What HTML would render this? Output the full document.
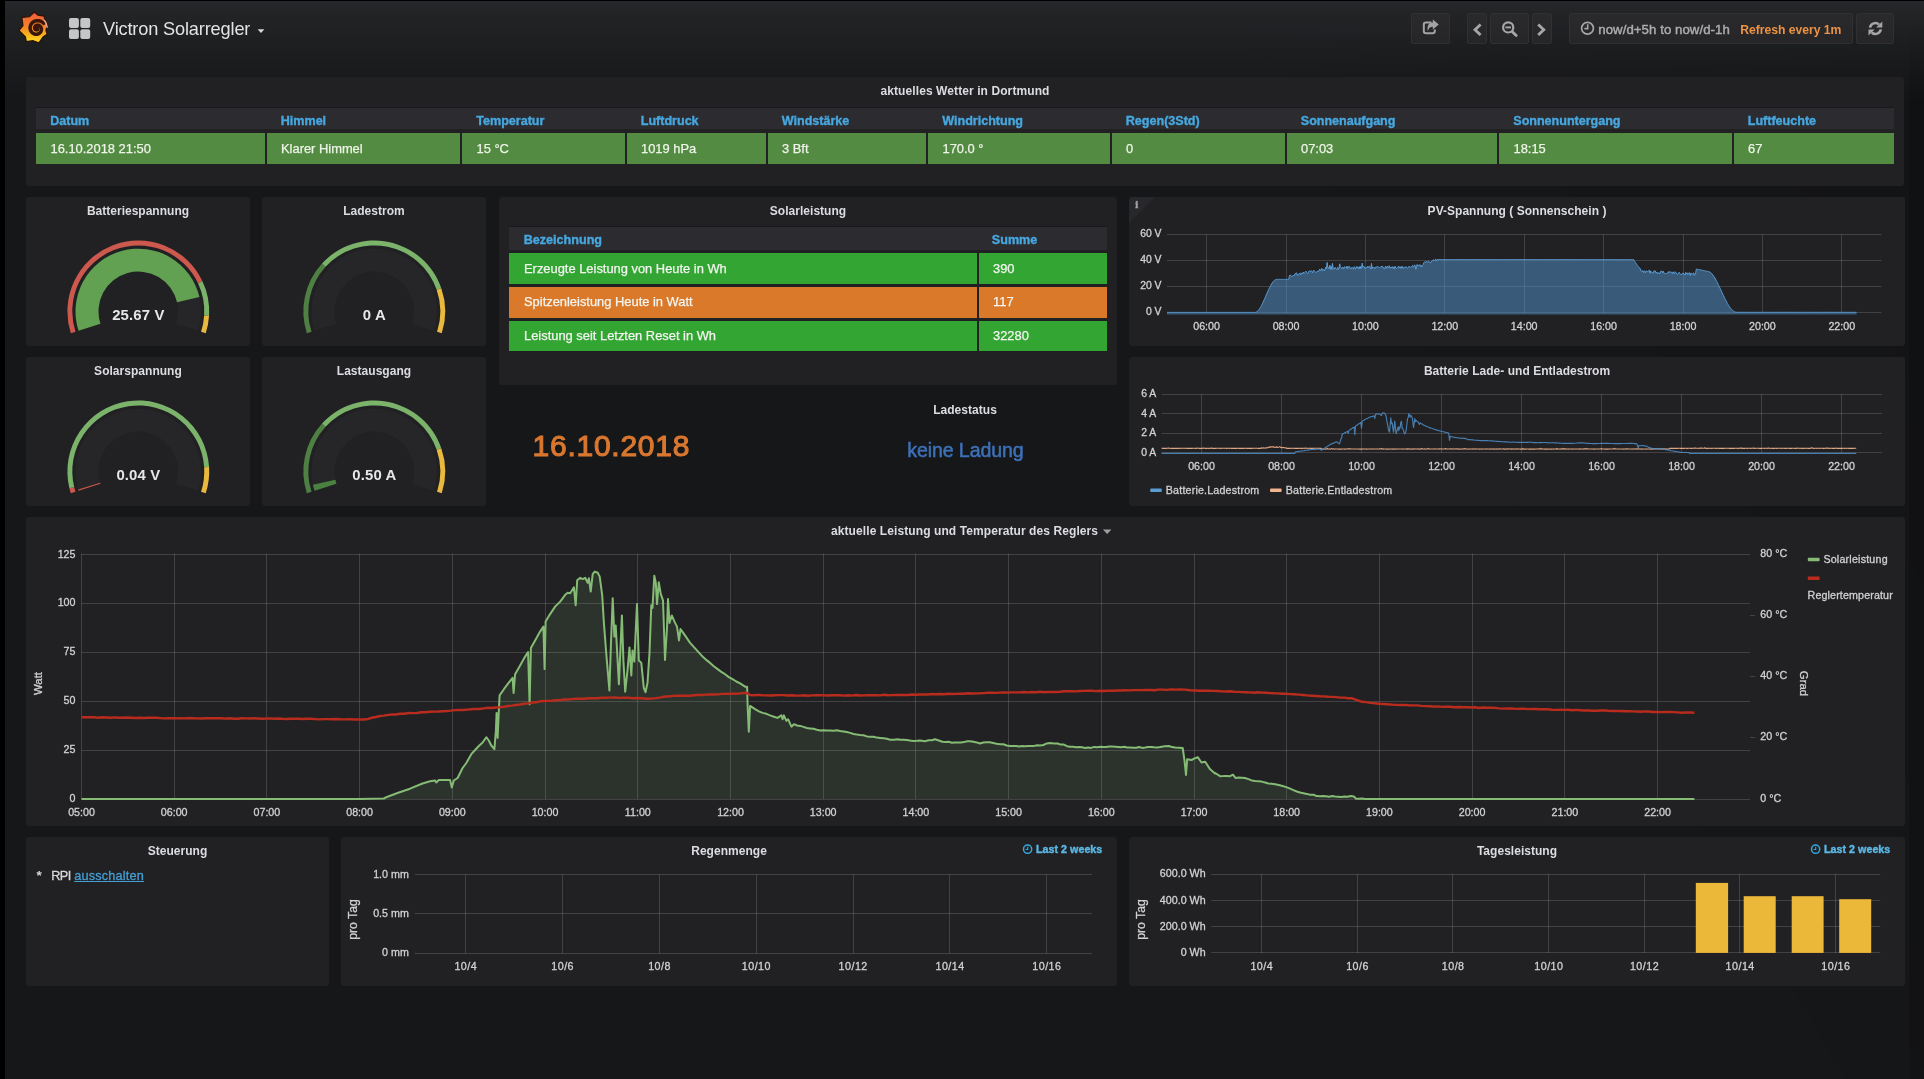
<!DOCTYPE html>
<html lang="de"><head><meta charset="utf-8"><title>Victron Solarregler</title>
<style>
html,body{margin:0;padding:0;}
body{width:1924px;height:1079px;overflow:hidden;position:relative;background:#161719;font-family:"Liberation Sans",sans-serif;color:#d8d9da;}
.t{position:absolute;white-space:nowrap;line-height:1;}
.p{position:absolute;background:#212124;border-radius:3px;}
.abs{position:absolute;}
svg{position:absolute;left:0;top:0;overflow:visible;}
svg text{font-family:"Liberation Sans",sans-serif;}
.btn{position:absolute;top:13px;height:31px;background:linear-gradient(#2a2a2d,#262629);border:1px solid #303033;border-radius:2px;box-sizing:border-box;}
.th{position:absolute;background:#2b2b30;}
.td{position:absolute;}
</style></head><body><div id="root" style="position:absolute;left:0;top:0;width:1924px;height:1079px;will-change:transform;">

<div class="abs" style="left:0;top:0;width:1924px;height:1079px;background:linear-gradient(60deg,rgba(0,0,0,0) 72%,rgba(0,0,0,0.12) 98%);"></div>
<div class="abs" style="left:1909px;top:1px;width:15px;height:1078px;background:rgba(0,0,0,0.16);"></div>
<div class="abs" style="left:0;top:0;width:1924px;height:104px;background:linear-gradient(180deg,#27282b 0px,#232527 9px,rgba(34,36,38,0.55) 50px,rgba(34,36,38,0) 102px);"></div>
<div class="abs" style="left:0;top:0;width:5px;height:1079px;background:#000;"></div>
<div class="abs" style="left:0;top:0;width:1924px;height:1px;background:#000;"></div>
<div class="btn" style="left:1411.2px;width:38.6px;"></div>
<div class="btn" style="left:1467.3px;width:19.5px;"></div>
<div class="btn" style="left:1490.2px;width:38.4px;"></div>
<div class="btn" style="left:1532.0px;width:20.0px;"></div>
<div class="btn" style="left:1569.0px;width:283.6px;"></div>
<div class="btn" style="left:1855.8px;width:38.3px;"></div>
<svg width="1924" height="75" viewBox="0 0 1924 75">
<defs><linearGradient id="lg" x1="0" y1="0" x2="0" y2="1"><stop offset="0" stop-color="#ef5b3c"/><stop offset="0.5" stop-color="#f58527"/><stop offset="0.85" stop-color="#fbc81c"/><stop offset="1" stop-color="#fdd820"/></linearGradient></defs>
<polygon points="34.4,12.0 38.1,15.2 44.2,16.2 44.7,19.6 47.4,25.2 45.9,30.1 47.1,34.2 43.0,37.0 38.9,42.8 33.2,40.7 26.3,41.6 25.5,37.0 18.9,30.5 23.0,25.6 21.8,17.4 29.5,16.6" fill="url(#lg)" stroke="#2a1208" stroke-width="1.2" stroke-linejoin="round"/>
<path d="M43.68,23.31 L42.69,22.39 L41.58,21.66 L40.39,21.12 L39.14,20.78 L37.88,20.63 L36.62,20.69 L35.41,20.95 L34.27,21.38 L33.23,21.98 L32.31,22.73 L31.54,23.60 L30.91,24.56 L30.46,25.60 L30.18,26.67 L30.08,27.76 L30.14,28.84 L30.38,29.87 L30.76,30.83 L31.29,31.71 L31.94,32.48 L32.68,33.12 L33.51,33.63 L34.38,34.00 L35.29,34.21 L36.20,34.28 L37.10,34.21 L37.95,33.99 L38.74,33.66 L39.45,33.20 L40.07,32.66 L40.58,32.03 L40.98,31.35 L41.25,30.63 L41.41,29.89 L41.44,29.16 L41.36,28.44 L41.17,27.77 L40.87,27.15 L40.50,26.61 L40.05,26.14 L39.55,25.76 L39.01,25.47 L38.44,25.29 L37.88,25.20 L37.32,25.20 L36.78,25.29 L36.29,25.46 L35.85,25.71 L35.46,26.01 L35.15,26.35 L34.90,26.73 L34.73,27.13 L34.63,27.54 L34.60,27.94 L34.64,28.32 L34.74,28.68 L34.89,28.99 L35.09,29.26 L35.31,29.48 L35.56,29.65" fill="none" stroke="#3a170a" stroke-width="3.5" stroke-linecap="round" stroke-linejoin="round"/>
<circle cx="37.0" cy="29.0" r="2.5" fill="#3a170a"/>
<path d="M44.4,20.4 A10.6,10.6 0 0 1 47.1,27.2" fill="none" stroke="#f4a88a" stroke-width="1.5" stroke-linecap="round"/>
<rect x="69.0" y="18.0" width="9.9" height="9.9" rx="2" fill="#c6c6c8"/>
<rect x="69.0" y="29.2" width="9.9" height="9.9" rx="2" fill="#c6c6c8"/>
<rect x="80.3" y="18.0" width="9.9" height="9.9" rx="2" fill="#c6c6c8"/>
<rect x="80.3" y="29.2" width="9.9" height="9.9" rx="2" fill="#c6c6c8"/>
<path d="M257.6,29.2 L264.4,29.2 L261,33 Z" fill="#d8d9da"/>
<path d="M1431.5,22.6 H1426 a2.2,2.2 0 0 0 -2.2,2.2 V31 a2.2,2.2 0 0 0 2.2,2.2 H1432.6 a2.2,2.2 0 0 0 2.2,-2.2 V29.6" fill="none" stroke="#a3a3a5" stroke-width="2"/>
<path d="M1432.8,19.6 L1438.8,24.6 L1432.8,29.6 V26.8 C1430,26.8 1428.6,28.2 1427.8,31.2 C1426.8,26 1429,22.6 1432.8,22.6 Z" fill="#a3a3a5"/>
<path d="M1480.6,24.4 L1475,29.7 L1480.6,35" fill="none" stroke="#a6a6a8" stroke-width="2.8"/>
<path d="M1538.2,24.4 L1543.8,29.7 L1538.2,35" fill="none" stroke="#a6a6a8" stroke-width="2.8"/>
<circle cx="1508.2" cy="27.4" r="5.1" fill="none" stroke="#a6a6a8" stroke-width="2.2"/>
<path d="M1505.4,27.4 H1511" stroke="#a6a6a8" stroke-width="2"/>
<path d="M1512.3,31.7 L1516.2,35.6" stroke="#a6a6a8" stroke-width="2.8" stroke-linecap="round"/>
<circle cx="1587.5" cy="28.2" r="5.9" fill="none" stroke="#a6a6a8" stroke-width="1.7"/>
<path d="M1587.7,24.3 V28.6 H1584.4" fill="none" stroke="#a6a6a8" stroke-width="1.6"/>
<g transform="translate(1875.4,28.5)" fill="#a6a6a8" stroke="none">
<path d="M-5.4,-0.9 A5.4,5.4 0 0 1 3.6,-4.0" fill="none" stroke="#a6a6a8" stroke-width="2.6"/>
<path d="M6.9,-7 V-0.9 H0.8 Z"/>
<path d="M5.4,0.9 A5.4,5.4 0 0 1 -3.6,4.0" fill="none" stroke="#a6a6a8" stroke-width="2.6"/>
<path d="M-6.9,7 V0.9 H-0.8 Z"/>
</g>
</svg>
<span class="t" style="left:103.0px;top:20.1px;font-size:18.20px;color:#e2e3e4;font-weight:normal;letter-spacing:-0.16px;">Victron Solarregler</span>
<span class="t" style="left:1598.3px;top:23.1px;font-size:13.20px;color:#acacae;font-weight:normal;letter-spacing:0.07px;-webkit-text-stroke:0.45px #acacae;">now/d+5h to now/d-1h</span>
<span class="t" style="left:1740.3px;top:24.0px;font-size:12.20px;color:#ec9245;font-weight:bold;letter-spacing:-0.04px;">Refresh every 1m</span>
<div class="p" style="left:26px;top:77px;width:1878px;height:109px;"></div>
<span class="t" style="left:880.5px;top:84.8px;font-size:12.00px;color:#dcdde0;font-weight:bold;letter-spacing:0.09px;">aktuelles Wetter in Dortmund</span>
<div class="th" style="left:36px;top:106.5px;width:1858px;height:22.7px;border-top:1px solid #19191b;box-sizing:border-box;"></div>
<div class="td" style="left:36.0px;top:133px;width:228.5px;height:30.8px;background:#548b43;"></div>
<span class="t" style="left:50.3px;top:114.8px;font-size:12.60px;color:#47a8e0;font-weight:bold;letter-spacing:-0.04px;-webkit-text-stroke:0.35px #47a8e0;">Datum</span>
<span class="t" style="left:50.5px;top:143.0px;font-size:12.90px;color:#eef4e8;font-weight:normal;letter-spacing:0.00px;-webkit-text-stroke:0.25px #eef4e8;">16.10.2018 21:50</span>
<div class="td" style="left:266.5px;top:133px;width:193.5px;height:30.8px;background:#548b43;"></div>
<span class="t" style="left:280.8px;top:114.8px;font-size:12.60px;color:#47a8e0;font-weight:bold;letter-spacing:-0.04px;-webkit-text-stroke:0.35px #47a8e0;">Himmel</span>
<span class="t" style="left:281.0px;top:143.0px;font-size:12.90px;color:#eef4e8;font-weight:normal;letter-spacing:0.00px;-webkit-text-stroke:0.25px #eef4e8;">Klarer Himmel</span>
<div class="td" style="left:462.0px;top:133px;width:162.5px;height:30.8px;background:#548b43;"></div>
<span class="t" style="left:476.3px;top:114.8px;font-size:12.60px;color:#47a8e0;font-weight:bold;letter-spacing:-0.03px;-webkit-text-stroke:0.35px #47a8e0;">Temperatur</span>
<span class="t" style="left:476.5px;top:143.0px;font-size:12.90px;color:#eef4e8;font-weight:normal;letter-spacing:0.00px;-webkit-text-stroke:0.25px #eef4e8;">15 °C</span>
<div class="td" style="left:626.5px;top:133px;width:139.0px;height:30.8px;background:#548b43;"></div>
<span class="t" style="left:640.8px;top:114.8px;font-size:12.60px;color:#47a8e0;font-weight:bold;letter-spacing:-0.03px;-webkit-text-stroke:0.35px #47a8e0;">Luftdruck</span>
<span class="t" style="left:641.0px;top:143.0px;font-size:12.90px;color:#eef4e8;font-weight:normal;letter-spacing:0.00px;-webkit-text-stroke:0.25px #eef4e8;">1019 hPa</span>
<div class="td" style="left:767.5px;top:133px;width:158.5px;height:30.8px;background:#548b43;"></div>
<span class="t" style="left:781.8px;top:114.8px;font-size:12.60px;color:#47a8e0;font-weight:bold;letter-spacing:-0.03px;-webkit-text-stroke:0.35px #47a8e0;">Windstärke</span>
<span class="t" style="left:782.0px;top:143.0px;font-size:12.90px;color:#eef4e8;font-weight:normal;letter-spacing:0.00px;-webkit-text-stroke:0.25px #eef4e8;">3 Bft</span>
<div class="td" style="left:928.0px;top:133px;width:181.5px;height:30.8px;background:#548b43;"></div>
<span class="t" style="left:942.3px;top:114.8px;font-size:12.60px;color:#47a8e0;font-weight:bold;letter-spacing:-0.03px;-webkit-text-stroke:0.35px #47a8e0;">Windrichtung</span>
<span class="t" style="left:942.5px;top:143.0px;font-size:12.90px;color:#eef4e8;font-weight:normal;letter-spacing:0.00px;-webkit-text-stroke:0.25px #eef4e8;">170.0 °</span>
<div class="td" style="left:1111.5px;top:133px;width:173.0px;height:30.8px;background:#548b43;"></div>
<span class="t" style="left:1125.8px;top:114.8px;font-size:12.60px;color:#47a8e0;font-weight:bold;letter-spacing:-0.03px;-webkit-text-stroke:0.35px #47a8e0;">Regen(3Std)</span>
<span class="t" style="left:1126.0px;top:143.0px;font-size:12.90px;color:#eef4e8;font-weight:normal;letter-spacing:0.00px;-webkit-text-stroke:0.25px #eef4e8;">0</span>
<div class="td" style="left:1286.5px;top:133px;width:210.5px;height:30.8px;background:#548b43;"></div>
<span class="t" style="left:1300.8px;top:114.8px;font-size:12.60px;color:#47a8e0;font-weight:bold;letter-spacing:-0.04px;-webkit-text-stroke:0.35px #47a8e0;">Sonnenaufgang</span>
<span class="t" style="left:1301.0px;top:143.0px;font-size:12.90px;color:#eef4e8;font-weight:normal;letter-spacing:0.00px;-webkit-text-stroke:0.25px #eef4e8;">07:03</span>
<div class="td" style="left:1499.0px;top:133px;width:232.5px;height:30.8px;background:#548b43;"></div>
<span class="t" style="left:1513.3px;top:114.8px;font-size:12.60px;color:#47a8e0;font-weight:bold;letter-spacing:-0.04px;-webkit-text-stroke:0.35px #47a8e0;">Sonnenuntergang</span>
<span class="t" style="left:1513.5px;top:143.0px;font-size:12.90px;color:#eef4e8;font-weight:normal;letter-spacing:0.00px;-webkit-text-stroke:0.25px #eef4e8;">18:15</span>
<div class="td" style="left:1733.5px;top:133px;width:160.5px;height:30.8px;background:#548b43;"></div>
<span class="t" style="left:1747.8px;top:114.8px;font-size:12.60px;color:#47a8e0;font-weight:bold;letter-spacing:-0.03px;-webkit-text-stroke:0.35px #47a8e0;">Luftfeuchte</span>
<span class="t" style="left:1748.0px;top:143.0px;font-size:12.90px;color:#eef4e8;font-weight:normal;letter-spacing:0.00px;-webkit-text-stroke:0.25px #eef4e8;">67</span>
<div class="p" style="left:26px;top:197px;width:224px;height:149px;"></div>
<span class="t" style="left:86.9px;top:204.8px;font-size:12.00px;color:#dcdde0;font-weight:bold;letter-spacing:0.01px;">Batteriespannung</span>
<svg width="1924" height="1079" viewBox="0 0 1924 1079"><path d="M78.57,330.81 A62.80,62.80 0 1 1 198.03,330.81 L176.15,323.70 A39.80,39.80 0 1 0 100.45,323.70 Z" fill="#262628"/><path d="M78.57,330.81 A62.80,62.80 0 1 1 199.45,297.09 L177.05,302.33 A39.80,39.80 0 1 0 100.45,323.70 Z" fill="#62a052"/><path d="M70.87,333.31 A70.90,70.90 0 0 1 202.45,281.21 L198.02,283.30 A66.00,66.00 0 0 0 75.53,331.80 Z" fill="#cd584d"/><path d="M202.45,281.21 A70.90,70.90 0 0 1 209.06,315.84 L204.17,315.54 A66.00,66.00 0 0 0 198.02,283.30 Z" fill="#7bb36b"/><path d="M209.06,315.84 A70.90,70.90 0 0 1 205.73,333.31 L201.07,331.80 A66.00,66.00 0 0 0 204.17,315.54 Z" fill="#e9b83f"/></svg>
<span class="t" style="left:112.2px;top:307.7px;font-size:14.90px;color:#e6e7e8;font-weight:bold;letter-spacing:0.15px;">25.67 V</span>
<div class="p" style="left:262px;top:197px;width:224px;height:149px;"></div>
<span class="t" style="left:343.2px;top:204.8px;font-size:12.00px;color:#dcdde0;font-weight:bold;letter-spacing:0.03px;">Ladestrom</span>
<svg width="1924" height="1079" viewBox="0 0 1924 1079"><path d="M314.57,330.81 A62.80,62.80 0 1 1 434.03,330.81 L412.15,323.70 A39.80,39.80 0 1 0 336.45,323.70 Z" fill="#262628"/><path d="M306.87,333.31 A70.90,70.90 0 0 1 322.01,263.52 L325.62,266.83 A66.00,66.00 0 0 0 311.53,331.80 Z" fill="#4f8043"/><path d="M322.01,263.52 A70.90,70.90 0 0 1 441.28,288.14 L436.65,289.75 A66.00,66.00 0 0 0 325.62,266.83 Z" fill="#7bb36b"/><path d="M441.28,288.14 A70.90,70.90 0 0 1 441.73,333.31 L437.07,331.80 A66.00,66.00 0 0 0 436.65,289.75 Z" fill="#e9b83f"/></svg>
<span class="t" style="left:362.8px;top:307.7px;font-size:14.90px;color:#e6e7e8;font-weight:bold;letter-spacing:0.15px;">0 A</span>
<div class="p" style="left:26px;top:357px;width:224px;height:149px;"></div>
<span class="t" style="left:94.1px;top:364.8px;font-size:12.00px;color:#dcdde0;font-weight:bold;letter-spacing:0.03px;">Solarspannung</span>
<svg width="1924" height="1079" viewBox="0 0 1924 1079"><path d="M78.57,490.81 A62.80,62.80 0 1 1 198.03,490.81 L176.15,483.70 A39.80,39.80 0 1 0 100.45,483.70 Z" fill="#262628"/><path d="M78.57,490.81 A62.80,62.80 0 0 1 78.15,489.45 L100.18,482.84 A39.80,39.80 0 0 0 100.45,483.70 Z" fill="#c9564b"/><path d="M70.87,493.31 A70.90,70.90 0 0 1 69.41,488.17 L74.17,487.01 A66.00,66.00 0 0 0 75.53,491.80 Z" fill="#cd584d"/><path d="M69.41,488.17 A70.90,70.90 0 1 1 209.06,466.95 L204.17,467.26 A66.00,66.00 0 1 0 74.17,487.01 Z" fill="#7bb36b"/><path d="M209.06,466.95 A70.90,70.90 0 0 1 205.73,493.31 L201.07,491.80 A66.00,66.00 0 0 0 204.17,467.26 Z" fill="#e9b83f"/></svg>
<span class="t" style="left:116.4px;top:467.7px;font-size:14.90px;color:#e6e7e8;font-weight:bold;letter-spacing:0.14px;">0.04 V</span>
<div class="p" style="left:262px;top:357px;width:224px;height:149px;"></div>
<span class="t" style="left:336.8px;top:364.8px;font-size:12.00px;color:#dcdde0;font-weight:bold;letter-spacing:0.03px;">Lastausgang</span>
<svg width="1924" height="1079" viewBox="0 0 1924 1079"><path d="M314.57,490.81 A62.80,62.80 0 1 1 434.03,490.81 L412.15,483.70 A39.80,39.80 0 1 0 336.45,483.70 Z" fill="#262628"/><path d="M314.57,490.81 A62.80,62.80 0 0 1 312.91,484.64 L335.39,479.79 A39.80,39.80 0 0 0 336.45,483.70 Z" fill="#4a8040"/><path d="M306.87,493.31 A70.90,70.90 0 0 1 322.01,423.52 L325.62,426.83 A66.00,66.00 0 0 0 311.53,491.80 Z" fill="#4f8043"/><path d="M322.01,423.52 A70.90,70.90 0 0 1 441.28,448.14 L436.65,449.75 A66.00,66.00 0 0 0 325.62,426.83 Z" fill="#7bb36b"/><path d="M441.28,448.14 A70.90,70.90 0 0 1 441.73,493.31 L437.07,491.80 A66.00,66.00 0 0 0 436.65,449.75 Z" fill="#e9b83f"/></svg>
<span class="t" style="left:352.3px;top:467.7px;font-size:14.90px;color:#e6e7e8;font-weight:bold;letter-spacing:0.14px;">0.50 A</span>
<div class="p" style="left:499px;top:197px;width:618px;height:188px;"></div>
<span class="t" style="left:769.8px;top:204.8px;font-size:12.00px;color:#dcdde0;font-weight:bold;letter-spacing:0.03px;">Solarleistung</span>
<div class="th" style="left:509px;top:226px;width:598px;height:24px;border-top:1px solid #19191b;box-sizing:border-box;"></div>
<span class="t" style="left:523.7px;top:234.4px;font-size:12.60px;color:#47a8e0;font-weight:bold;letter-spacing:0.00px;-webkit-text-stroke:0.35px #47a8e0;">Bezeichnung</span>
<span class="t" style="left:991.8px;top:234.4px;font-size:12.60px;color:#47a8e0;font-weight:bold;letter-spacing:0.00px;-webkit-text-stroke:0.35px #47a8e0;">Summe</span>
<div class="td" style="left:509px;top:253.3px;width:467.5px;height:30.9px;background:#33a532;"></div>
<div class="td" style="left:978.5px;top:253.3px;width:128.5px;height:30.9px;background:#33a532;"></div>
<span class="t" style="left:524.0px;top:262.6px;font-size:12.90px;color:#f2f5f0;font-weight:normal;letter-spacing:0.00px;-webkit-text-stroke:0.25px #f2f5f0;">Erzeugte Leistung von Heute in Wh</span>
<span class="t" style="left:993.0px;top:262.6px;font-size:12.90px;color:#f2f5f0;font-weight:normal;letter-spacing:0.00px;-webkit-text-stroke:0.25px #f2f5f0;">390</span>
<div class="td" style="left:509px;top:286.6px;width:467.5px;height:31.4px;background:#db792a;"></div>
<div class="td" style="left:978.5px;top:286.6px;width:128.5px;height:31.4px;background:#db792a;"></div>
<span class="t" style="left:524.0px;top:296.2px;font-size:12.90px;color:#f2f5f0;font-weight:normal;letter-spacing:0.00px;-webkit-text-stroke:0.25px #f2f5f0;">Spitzenleistung Heute in Watt</span>
<span class="t" style="left:993.0px;top:296.2px;font-size:12.90px;color:#f2f5f0;font-weight:normal;letter-spacing:0.00px;-webkit-text-stroke:0.25px #f2f5f0;">117</span>
<div class="td" style="left:509px;top:320.6px;width:467.5px;height:30.6px;background:#33a532;"></div>
<div class="td" style="left:978.5px;top:320.6px;width:128.5px;height:30.6px;background:#33a532;"></div>
<span class="t" style="left:524.0px;top:329.8px;font-size:12.90px;color:#f2f5f0;font-weight:normal;letter-spacing:0.00px;-webkit-text-stroke:0.25px #f2f5f0;">Leistung seit Letzten Reset in Wh</span>
<span class="t" style="left:993.0px;top:329.8px;font-size:12.90px;color:#f2f5f0;font-weight:normal;letter-spacing:0.00px;-webkit-text-stroke:0.25px #f2f5f0;">32280</span>
<span class="t" style="left:532.6px;top:430.6px;font-size:30.00px;color:#d9772f;font-weight:normal;letter-spacing:0.73px;-webkit-text-stroke:1.1px #d9772f;">16.10.2018</span>
<span class="t" style="left:933.2px;top:403.7px;font-size:12.00px;color:#dcdde0;font-weight:bold;letter-spacing:0.03px;">Ladestatus</span>
<span class="t" style="left:907.2px;top:440.7px;font-size:19.60px;color:#3d71b8;font-weight:normal;letter-spacing:-0.10px;-webkit-text-stroke:0.5px #3d71b8;">keine Ladung</span>
<div class="p" style="left:1129px;top:197px;width:776px;height:149px;"></div>
<span class="t" style="left:1427.6px;top:204.8px;font-size:12.00px;color:#dcdde0;font-weight:bold;letter-spacing:0.03px;">PV-Spannung ( Sonnenschein )</span>
<svg width="1924" height="1079" viewBox="0 0 1924 1079"><path d="M1129,200 a3,3 0 0 1 3,-3 H1155 L1129,223 Z" fill="#28282c"/><text x="1136.8" y="208.4" font-size="10.50" fill="#a2a2a4" text-anchor="middle" letter-spacing="0.00" font-weight="bold" stroke="#a2a2a4" stroke-width="0.5" style="font-family:Liberation Serif,serif">i</text><path d="M1167,312.5 H1881.5" stroke="rgba(200,200,200,0.2)" stroke-width="1"/><text x="1161.5" y="315.4" font-size="10.40" fill="#d0d1d3" text-anchor="end" letter-spacing="0.00" stroke="#d0d1d3" stroke-width="0.3" >0 V</text><path d="M1167,286.5 H1881.5" stroke="rgba(200,200,200,0.2)" stroke-width="1"/><text x="1161.5" y="289.4" font-size="10.40" fill="#d0d1d3" text-anchor="end" letter-spacing="0.00" stroke="#d0d1d3" stroke-width="0.3" >20 V</text><path d="M1167,260.5 H1881.5" stroke="rgba(200,200,200,0.2)" stroke-width="1"/><text x="1161.5" y="263.3" font-size="10.40" fill="#d0d1d3" text-anchor="end" letter-spacing="0.00" stroke="#d0d1d3" stroke-width="0.3" >40 V</text><path d="M1167,234.5 H1881.5" stroke="rgba(200,200,200,0.2)" stroke-width="1"/><text x="1161.5" y="237.2" font-size="10.40" fill="#d0d1d3" text-anchor="end" letter-spacing="0.00" stroke="#d0d1d3" stroke-width="0.3" >60 V</text><path d="M1206.5,234.5 V313" stroke="rgba(200,200,200,0.2)" stroke-width="1"/><text x="1206.6" y="330.1" font-size="10.70" fill="#d0d1d3" text-anchor="middle" letter-spacing="0.00" stroke="#d0d1d3" stroke-width="0.3" >06:00</text><path d="M1286.5,234.5 V313" stroke="rgba(200,200,200,0.2)" stroke-width="1"/><text x="1286.0" y="330.1" font-size="10.70" fill="#d0d1d3" text-anchor="middle" letter-spacing="0.00" stroke="#d0d1d3" stroke-width="0.3" >08:00</text><path d="M1365.5,234.5 V313" stroke="rgba(200,200,200,0.2)" stroke-width="1"/><text x="1365.4" y="330.1" font-size="10.70" fill="#d0d1d3" text-anchor="middle" letter-spacing="0.00" stroke="#d0d1d3" stroke-width="0.3" >10:00</text><path d="M1444.5,234.5 V313" stroke="rgba(200,200,200,0.2)" stroke-width="1"/><text x="1444.8" y="330.1" font-size="10.70" fill="#d0d1d3" text-anchor="middle" letter-spacing="0.00" stroke="#d0d1d3" stroke-width="0.3" >12:00</text><path d="M1524.5,234.5 V313" stroke="rgba(200,200,200,0.2)" stroke-width="1"/><text x="1524.2" y="330.1" font-size="10.70" fill="#d0d1d3" text-anchor="middle" letter-spacing="0.00" stroke="#d0d1d3" stroke-width="0.3" >14:00</text><path d="M1603.5,234.5 V313" stroke="rgba(200,200,200,0.2)" stroke-width="1"/><text x="1603.6" y="330.1" font-size="10.70" fill="#d0d1d3" text-anchor="middle" letter-spacing="0.00" stroke="#d0d1d3" stroke-width="0.3" >16:00</text><path d="M1683.5,234.5 V313" stroke="rgba(200,200,200,0.2)" stroke-width="1"/><text x="1683.0" y="330.1" font-size="10.70" fill="#d0d1d3" text-anchor="middle" letter-spacing="0.00" stroke="#d0d1d3" stroke-width="0.3" >18:00</text><path d="M1762.5,234.5 V313" stroke="rgba(200,200,200,0.2)" stroke-width="1"/><text x="1762.4" y="330.1" font-size="10.70" fill="#d0d1d3" text-anchor="middle" letter-spacing="0.00" stroke="#d0d1d3" stroke-width="0.3" >20:00</text><path d="M1841.5,234.5 V313" stroke="rgba(200,200,200,0.2)" stroke-width="1"/><text x="1841.8" y="330.1" font-size="10.70" fill="#d0d1d3" text-anchor="middle" letter-spacing="0.00" stroke="#d0d1d3" stroke-width="0.3" >22:00</text><path d="M1167.0,312.4 L1167.7,312.4 L1168.3,312.4 L1169.0,312.4 L1169.6,312.4 L1170.3,312.4 L1171.0,312.4 L1171.6,312.4 L1172.3,312.4 L1173.0,312.4 L1173.6,312.4 L1174.3,312.4 L1174.9,312.4 L1175.6,312.4 L1176.3,312.4 L1176.9,312.4 L1177.6,312.4 L1178.2,312.4 L1178.9,312.4 L1179.6,312.4 L1180.2,312.4 L1180.9,312.4 L1181.6,312.4 L1182.2,312.4 L1182.9,312.4 L1183.5,312.4 L1184.2,312.4 L1184.9,312.4 L1185.5,312.4 L1186.2,312.4 L1186.8,312.4 L1187.5,312.4 L1188.2,312.4 L1188.8,312.4 L1189.5,312.4 L1190.2,312.4 L1190.8,312.4 L1191.5,312.4 L1192.1,312.4 L1192.8,312.4 L1193.5,312.4 L1194.1,312.4 L1194.8,312.4 L1195.5,312.4 L1196.1,312.4 L1196.8,312.4 L1197.4,312.4 L1198.1,312.4 L1198.8,312.4 L1199.4,312.4 L1200.1,312.4 L1200.7,312.4 L1201.4,312.4 L1202.1,312.4 L1202.7,312.4 L1203.4,312.4 L1204.1,312.4 L1204.7,312.4 L1205.4,312.4 L1206.0,312.4 L1206.7,312.4 L1207.4,312.4 L1208.0,312.4 L1208.7,312.4 L1209.3,312.4 L1210.0,312.4 L1210.7,312.4 L1211.3,312.4 L1212.0,312.4 L1212.7,312.4 L1213.3,312.4 L1214.0,312.4 L1214.6,312.4 L1215.3,312.4 L1216.0,312.4 L1216.6,312.4 L1217.3,312.4 L1217.9,312.4 L1218.6,312.4 L1219.3,312.4 L1219.9,312.4 L1220.6,312.4 L1221.3,312.4 L1221.9,312.4 L1222.6,312.4 L1223.2,312.4 L1223.9,312.4 L1224.6,312.4 L1225.2,312.4 L1225.9,312.4 L1226.5,312.4 L1227.2,312.4 L1227.9,312.4 L1228.5,312.4 L1229.2,312.4 L1229.9,312.4 L1230.5,312.4 L1231.2,312.4 L1231.8,312.4 L1232.5,312.4 L1233.2,312.4 L1233.8,312.4 L1234.5,312.4 L1235.2,312.4 L1235.8,312.4 L1236.5,312.4 L1237.1,312.4 L1237.8,312.4 L1238.5,312.4 L1239.1,312.4 L1239.8,312.4 L1240.4,312.4 L1241.1,312.4 L1241.8,312.4 L1242.4,312.4 L1243.1,312.4 L1243.8,312.4 L1244.4,312.4 L1245.1,312.4 L1245.7,312.4 L1246.4,312.4 L1247.1,312.4 L1247.7,312.4 L1248.4,312.4 L1249.0,312.4 L1249.7,312.4 L1250.4,312.4 L1251.0,312.4 L1251.7,312.4 L1252.4,312.4 L1253.0,312.4 L1253.7,312.4 L1254.3,312.4 L1255.0,312.4 L1255.7,312.3 L1256.3,312.1 L1257.0,311.7 L1257.6,311.2 L1258.3,310.4 L1259.0,309.6 L1259.6,308.7 L1260.3,307.6 L1261.0,306.4 L1261.6,305.2 L1262.3,303.9 L1262.9,302.5 L1263.6,301.0 L1264.3,299.6 L1264.9,298.1 L1265.6,296.5 L1266.2,295.0 L1266.9,293.5 L1267.6,292.0 L1268.2,290.5 L1268.9,289.1 L1269.6,287.7 L1270.2,286.4 L1270.9,285.2 L1271.5,284.0 L1272.2,283.0 L1272.9,282.1 L1273.5,281.2 L1274.2,280.6 L1274.9,280.0 L1275.5,279.7 L1276.2,279.5 L1276.8,279.4 L1277.5,279.4 L1278.2,279.4 L1278.8,279.4 L1279.5,279.4 L1280.1,279.4 L1280.8,279.4 L1281.5,279.4 L1282.1,279.4 L1282.8,279.4 L1283.5,279.4 L1284.1,279.4 L1284.8,279.4 L1285.4,279.4 L1286.1,279.4 L1286.8,279.4 L1287.4,279.4 L1288.1,279.4 L1288.7,279.4 L1289.4,276.1 L1290.1,274.9 L1290.7,275.2 L1291.4,276.5 L1292.1,276.5 L1292.7,276.3 L1293.4,275.0 L1294.0,275.9 L1294.7,274.2 L1295.4,274.2 L1296.0,272.8 L1296.7,273.1 L1297.3,275.2 L1298.0,274.6 L1298.7,274.9 L1299.3,273.3 L1300.0,273.5 L1300.7,274.9 L1301.3,272.8 L1302.0,273.9 L1302.6,273.3 L1303.3,272.1 L1304.0,273.7 L1304.6,272.7 L1305.3,272.0 L1306.0,271.1 L1306.6,272.7 L1307.3,273.4 L1307.9,273.7 L1308.6,271.3 L1309.3,270.8 L1309.9,271.3 L1310.6,271.5 L1311.2,270.6 L1311.9,271.6 L1312.6,272.8 L1313.2,270.8 L1313.9,270.2 L1314.6,271.4 L1315.2,272.4 L1315.9,271.9 L1316.5,272.1 L1317.2,271.8 L1317.9,270.8 L1318.5,271.7 L1319.2,270.1 L1319.8,269.1 L1320.5,270.7 L1321.2,270.3 L1321.8,268.3 L1322.5,270.7 L1323.2,270.4 L1323.8,269.2 L1324.5,270.9 L1325.1,269.6 L1325.8,267.1 L1326.5,268.5 L1327.1,262.4 L1327.8,267.6 L1328.4,267.6 L1329.1,268.8 L1329.8,265.2 L1330.4,269.4 L1331.1,266.3 L1331.8,269.5 L1332.4,263.4 L1333.1,268.0 L1333.7,269.2 L1334.4,268.8 L1335.1,267.3 L1335.7,268.5 L1336.4,269.6 L1337.0,268.8 L1337.7,267.3 L1338.4,269.8 L1339.0,268.2 L1339.7,263.8 L1340.4,266.8 L1341.0,267.6 L1341.7,268.6 L1342.3,267.4 L1343.0,267.3 L1343.7,269.1 L1344.3,266.7 L1345.0,267.2 L1345.7,267.4 L1346.3,268.1 L1347.0,266.1 L1347.6,268.9 L1348.3,266.7 L1349.0,266.7 L1349.6,266.6 L1350.3,268.9 L1350.9,269.0 L1351.6,267.6 L1352.3,266.9 L1352.9,267.5 L1353.6,269.3 L1354.3,266.7 L1354.9,267.2 L1355.6,268.9 L1356.2,268.4 L1356.9,266.4 L1357.6,268.2 L1358.2,267.2 L1358.9,269.0 L1359.5,266.6 L1360.2,268.9 L1360.9,266.3 L1361.5,268.3 L1362.2,263.2 L1362.9,267.3 L1363.5,266.4 L1364.2,266.6 L1364.8,268.6 L1365.5,268.4 L1366.2,267.4 L1366.8,268.0 L1367.5,266.4 L1368.1,267.8 L1368.8,266.4 L1369.5,266.3 L1370.1,267.5 L1370.8,269.1 L1371.5,263.4 L1372.1,268.6 L1372.8,266.9 L1373.4,268.1 L1374.1,267.4 L1374.8,268.8 L1375.4,268.3 L1376.1,266.7 L1376.7,267.3 L1377.4,266.2 L1378.1,267.1 L1378.7,267.4 L1379.4,267.6 L1380.1,267.5 L1380.7,266.8 L1381.4,266.0 L1382.0,267.2 L1382.7,266.3 L1383.4,268.5 L1384.0,268.7 L1384.7,268.7 L1385.4,266.4 L1386.0,268.4 L1386.7,266.8 L1387.3,266.1 L1388.0,268.1 L1388.7,267.6 L1389.3,265.7 L1390.0,268.3 L1390.6,267.2 L1391.3,268.1 L1392.0,266.5 L1392.6,267.0 L1393.3,268.7 L1394.0,266.7 L1394.6,268.5 L1395.3,266.2 L1395.9,268.3 L1396.6,268.5 L1397.3,267.8 L1397.9,267.3 L1398.6,266.0 L1399.2,268.1 L1399.9,266.8 L1400.6,268.3 L1401.2,266.4 L1401.9,268.3 L1402.6,266.5 L1403.2,268.2 L1403.9,268.3 L1404.5,267.1 L1405.2,266.7 L1405.9,267.6 L1406.5,266.8 L1407.2,268.1 L1407.8,268.3 L1408.5,267.4 L1409.2,266.0 L1409.8,266.8 L1410.5,267.3 L1411.2,267.6 L1411.8,266.6 L1412.5,265.4 L1413.1,266.9 L1413.8,266.9 L1414.5,264.8 L1415.1,265.5 L1415.8,269.3 L1416.4,267.8 L1417.1,264.5 L1417.8,266.0 L1418.4,265.3 L1419.1,265.7 L1419.8,264.6 L1420.4,266.4 L1421.1,265.1 L1421.7,266.9 L1422.4,265.4 L1423.1,264.6 L1423.7,262.8 L1424.4,262.2 L1425.1,261.6 L1425.7,262.5 L1426.4,261.5 L1427.0,261.6 L1427.7,262.3 L1428.4,261.1 L1429.0,261.4 L1429.7,262.6 L1430.3,262.7 L1431.0,262.6 L1431.7,261.0 L1432.3,260.6 L1433.0,260.8 L1433.7,259.6 L1434.3,260.4 L1435.0,259.7 L1435.6,259.2 L1436.3,261.1 L1437.0,259.5 L1437.6,259.5 L1438.3,259.5 L1438.9,259.5 L1439.6,259.5 L1440.3,259.5 L1440.9,259.5 L1441.6,259.5 L1442.3,259.5 L1442.9,259.5 L1443.6,259.5 L1444.2,259.5 L1444.9,259.5 L1445.6,259.5 L1446.2,259.5 L1446.9,259.5 L1447.5,259.5 L1448.2,259.5 L1448.9,259.5 L1449.5,259.5 L1450.2,259.5 L1450.9,259.5 L1451.5,259.5 L1452.2,259.5 L1452.8,259.5 L1453.5,259.5 L1454.2,259.5 L1454.8,259.5 L1455.5,259.5 L1456.1,259.5 L1456.8,259.5 L1457.5,259.5 L1458.1,259.5 L1458.8,259.5 L1459.5,259.5 L1460.1,259.5 L1460.8,259.5 L1461.4,259.5 L1462.1,259.5 L1462.8,259.5 L1463.4,259.5 L1464.1,259.5 L1464.8,259.5 L1465.4,259.5 L1466.1,259.5 L1466.7,259.5 L1467.4,259.5 L1468.1,259.5 L1468.7,259.5 L1469.4,259.5 L1470.0,259.5 L1470.7,259.5 L1471.4,259.5 L1472.0,259.5 L1472.7,259.5 L1473.4,259.5 L1474.0,259.5 L1474.7,259.5 L1475.3,259.5 L1476.0,259.5 L1476.7,259.5 L1477.3,259.5 L1478.0,259.5 L1478.6,259.5 L1479.3,259.5 L1480.0,259.5 L1480.6,259.5 L1481.3,259.5 L1482.0,259.5 L1482.6,259.5 L1483.3,259.5 L1483.9,259.5 L1484.6,259.5 L1485.3,259.5 L1485.9,259.5 L1486.6,259.5 L1487.2,259.5 L1487.9,259.5 L1488.6,259.5 L1489.2,259.5 L1489.9,259.5 L1490.6,259.5 L1491.2,259.5 L1491.9,259.5 L1492.5,259.5 L1493.2,259.5 L1493.9,259.5 L1494.5,259.5 L1495.2,259.5 L1495.8,259.5 L1496.5,259.5 L1497.2,259.5 L1497.8,259.5 L1498.5,259.5 L1499.2,259.5 L1499.8,259.5 L1500.5,259.5 L1501.1,259.5 L1501.8,259.5 L1502.5,259.5 L1503.1,259.5 L1503.8,259.5 L1504.5,259.5 L1505.1,259.5 L1505.8,259.5 L1506.4,259.5 L1507.1,259.5 L1507.8,259.5 L1508.4,259.5 L1509.1,259.5 L1509.7,259.5 L1510.4,259.5 L1511.1,259.5 L1511.7,259.5 L1512.4,259.5 L1513.1,259.5 L1513.7,259.5 L1514.4,259.5 L1515.0,259.5 L1515.7,259.5 L1516.4,259.5 L1517.0,259.5 L1517.7,259.5 L1518.3,259.5 L1519.0,259.5 L1519.7,259.5 L1520.3,259.5 L1521.0,259.5 L1521.7,259.5 L1522.3,259.5 L1523.0,259.5 L1523.6,259.5 L1524.3,259.5 L1525.0,259.5 L1525.6,259.5 L1526.3,259.5 L1526.9,259.5 L1527.6,259.5 L1528.3,259.5 L1528.9,259.5 L1529.6,259.5 L1530.3,259.5 L1530.9,259.5 L1531.6,259.5 L1532.2,259.5 L1532.9,259.5 L1533.6,259.5 L1534.2,259.5 L1534.9,259.5 L1535.5,259.5 L1536.2,259.5 L1536.9,259.5 L1537.5,259.5 L1538.2,259.5 L1538.9,259.5 L1539.5,259.5 L1540.2,259.5 L1540.8,259.5 L1541.5,259.5 L1542.2,259.5 L1542.8,259.5 L1543.5,259.5 L1544.2,259.5 L1544.8,259.5 L1545.5,259.5 L1546.1,259.5 L1546.8,259.5 L1547.5,259.5 L1548.1,259.5 L1548.8,259.5 L1549.4,259.5 L1550.1,259.5 L1550.8,259.5 L1551.4,259.5 L1552.1,259.5 L1552.8,259.5 L1553.4,259.5 L1554.1,259.5 L1554.7,259.5 L1555.4,259.5 L1556.1,259.5 L1556.7,259.5 L1557.4,259.5 L1558.0,259.5 L1558.7,259.5 L1559.4,259.5 L1560.0,259.5 L1560.7,259.5 L1561.4,259.5 L1562.0,259.5 L1562.7,259.5 L1563.3,259.5 L1564.0,259.5 L1564.7,259.5 L1565.3,259.5 L1566.0,259.5 L1566.6,259.5 L1567.3,259.5 L1568.0,259.5 L1568.6,259.5 L1569.3,259.5 L1570.0,259.5 L1570.6,259.5 L1571.3,259.5 L1571.9,259.5 L1572.6,259.5 L1573.3,259.5 L1573.9,259.5 L1574.6,259.5 L1575.2,259.5 L1575.9,259.5 L1576.6,259.5 L1577.2,259.5 L1577.9,259.5 L1578.6,259.5 L1579.2,259.5 L1579.9,259.5 L1580.5,259.5 L1581.2,259.6 L1581.9,259.6 L1582.5,259.6 L1583.2,259.6 L1583.9,259.6 L1584.5,259.6 L1585.2,259.6 L1585.8,259.6 L1586.5,259.6 L1587.2,259.6 L1587.8,259.6 L1588.5,259.6 L1589.1,259.6 L1589.8,259.6 L1590.5,259.6 L1591.1,259.6 L1591.8,259.6 L1592.5,259.6 L1593.1,259.6 L1593.8,259.6 L1594.4,259.6 L1595.1,259.6 L1595.8,259.6 L1596.4,259.6 L1597.1,259.6 L1597.7,259.6 L1598.4,259.6 L1599.1,259.6 L1599.7,259.6 L1600.4,259.6 L1601.1,259.6 L1601.7,259.6 L1602.4,259.6 L1603.0,259.6 L1603.7,259.6 L1604.4,259.6 L1605.0,259.6 L1605.7,259.6 L1606.3,259.6 L1607.0,259.6 L1607.7,259.6 L1608.3,259.6 L1609.0,259.6 L1609.7,259.6 L1610.3,259.6 L1611.0,259.6 L1611.6,259.6 L1612.3,259.6 L1613.0,259.6 L1613.6,259.6 L1614.3,259.6 L1614.9,259.6 L1615.6,259.6 L1616.3,259.6 L1616.9,259.6 L1617.6,259.6 L1618.3,259.6 L1618.9,259.6 L1619.6,259.6 L1620.2,259.6 L1620.9,259.6 L1621.6,259.6 L1622.2,259.6 L1622.9,259.6 L1623.6,259.6 L1624.2,259.6 L1624.9,259.6 L1625.5,259.6 L1626.2,259.6 L1626.9,259.6 L1627.5,259.6 L1628.2,259.6 L1628.8,259.6 L1629.5,259.6 L1630.2,259.6 L1630.8,259.6 L1631.5,259.6 L1632.2,259.6 L1632.8,259.6 L1633.5,259.6 L1634.1,260.5 L1634.8,261.5 L1635.5,262.5 L1636.1,263.5 L1636.8,264.5 L1637.4,265.4 L1638.1,266.4 L1638.8,267.4 L1639.4,267.6 L1640.1,268.6 L1640.8,270.3 L1641.4,271.4 L1642.1,270.5 L1642.7,270.9 L1643.4,272.5 L1644.1,270.7 L1644.7,271.3 L1645.4,272.9 L1646.0,271.0 L1646.7,271.0 L1647.4,271.6 L1648.0,271.8 L1648.7,270.5 L1649.4,270.3 L1650.0,273.3 L1650.7,270.8 L1651.3,272.0 L1652.0,272.8 L1652.7,272.8 L1653.3,273.1 L1654.0,270.6 L1654.6,271.0 L1655.3,270.9 L1656.0,273.0 L1656.6,272.2 L1657.3,273.8 L1658.0,272.4 L1658.6,273.4 L1659.3,272.9 L1659.9,273.9 L1660.6,271.3 L1661.3,271.1 L1661.9,271.2 L1662.6,272.9 L1663.3,271.0 L1663.9,273.0 L1664.6,273.3 L1665.2,273.9 L1665.9,273.4 L1666.6,273.5 L1667.2,272.7 L1667.9,273.2 L1668.5,271.6 L1669.2,272.5 L1669.9,271.5 L1670.5,272.3 L1671.2,272.3 L1671.9,272.2 L1672.5,273.7 L1673.2,271.8 L1673.8,273.2 L1674.5,273.8 L1675.2,271.7 L1675.8,272.8 L1676.5,273.1 L1677.1,274.4 L1677.8,274.3 L1678.5,273.4 L1679.1,272.2 L1679.8,273.6 L1680.5,274.5 L1681.1,274.1 L1681.8,274.4 L1682.4,273.4 L1683.1,272.9 L1683.8,274.0 L1684.4,274.1 L1685.1,275.2 L1685.7,272.4 L1686.4,273.9 L1687.1,272.8 L1687.7,274.7 L1688.4,274.3 L1689.1,272.6 L1689.7,272.9 L1690.4,275.6 L1691.0,272.9 L1691.7,273.9 L1692.4,274.5 L1693.0,273.2 L1693.7,272.8 L1694.3,275.5 L1695.0,274.3 L1695.7,273.0 L1696.3,269.2 L1697.0,269.2 L1697.7,269.3 L1698.3,269.4 L1699.0,269.6 L1699.6,269.7 L1700.3,269.8 L1701.0,270.0 L1701.6,270.1 L1702.3,270.3 L1703.0,270.4 L1703.6,270.6 L1704.3,270.7 L1704.9,270.9 L1705.6,271.0 L1706.3,271.2 L1706.9,271.3 L1707.6,271.4 L1708.2,271.6 L1708.9,271.7 L1709.6,271.9 L1710.2,272.3 L1710.9,272.8 L1711.6,273.4 L1712.2,274.1 L1712.9,275.0 L1713.5,275.9 L1714.2,276.9 L1714.9,278.0 L1715.5,279.1 L1716.2,280.3 L1716.8,281.6 L1717.5,282.9 L1718.2,284.3 L1718.8,285.7 L1719.5,287.1 L1720.2,288.5 L1720.8,289.9 L1721.5,291.3 L1722.1,292.8 L1722.8,294.2 L1723.5,295.6 L1724.1,297.0 L1724.8,298.3 L1725.4,299.6 L1726.1,300.9 L1726.8,302.2 L1727.4,303.4 L1728.1,304.5 L1728.8,305.6 L1729.4,306.6 L1730.1,307.5 L1730.7,308.4 L1731.4,309.2 L1732.1,309.9 L1732.7,310.5 L1733.4,311.1 L1734.0,311.5 L1734.7,311.9 L1735.4,312.1 L1736.0,312.3 L1736.7,312.3 L1737.4,312.3 L1738.0,312.3 L1738.7,312.3 L1739.3,312.3 L1740.0,312.3 L1740.7,312.3 L1741.3,312.3 L1742.0,312.3 L1742.7,312.3 L1743.3,312.3 L1744.0,312.3 L1744.6,312.3 L1745.3,312.3 L1746.0,312.3 L1746.6,312.3 L1747.3,312.3 L1747.9,312.3 L1748.6,312.3 L1749.3,312.3 L1749.9,312.3 L1750.6,312.3 L1751.3,312.3 L1751.9,312.3 L1752.6,312.3 L1753.2,312.3 L1753.9,312.3 L1754.6,312.3 L1755.2,312.3 L1755.9,312.3 L1756.5,312.3 L1757.2,312.3 L1757.9,312.3 L1758.5,312.3 L1759.2,312.3 L1759.9,312.3 L1760.5,312.3 L1761.2,312.3 L1761.8,312.3 L1762.5,312.3 L1763.2,312.3 L1763.8,312.3 L1764.5,312.3 L1765.1,312.3 L1765.8,312.3 L1766.5,312.3 L1767.1,312.3 L1767.8,312.3 L1768.5,312.3 L1769.1,312.3 L1769.8,312.3 L1770.4,312.3 L1771.1,312.3 L1771.8,312.3 L1772.4,312.3 L1773.1,312.3 L1773.7,312.3 L1774.4,312.3 L1775.1,312.3 L1775.7,312.3 L1776.4,312.3 L1777.1,312.3 L1777.7,312.3 L1778.4,312.3 L1779.0,312.3 L1779.7,312.3 L1780.4,312.3 L1781.0,312.3 L1781.7,312.3 L1782.4,312.3 L1783.0,312.3 L1783.7,312.3 L1784.3,312.3 L1785.0,312.3 L1785.7,312.3 L1786.3,312.3 L1787.0,312.3 L1787.6,312.3 L1788.3,312.3 L1789.0,312.3 L1789.6,312.3 L1790.3,312.3 L1791.0,312.3 L1791.6,312.3 L1792.3,312.3 L1792.9,312.3 L1793.6,312.3 L1794.3,312.3 L1794.9,312.3 L1795.6,312.3 L1796.2,312.3 L1796.9,312.3 L1797.6,312.3 L1798.2,312.3 L1798.9,312.3 L1799.6,312.3 L1800.2,312.3 L1800.9,312.3 L1801.5,312.3 L1802.2,312.3 L1802.9,312.3 L1803.5,312.3 L1804.2,312.3 L1804.8,312.3 L1805.5,312.3 L1806.2,312.3 L1806.8,312.3 L1807.5,312.3 L1808.2,312.3 L1808.8,312.3 L1809.5,312.3 L1810.1,312.3 L1810.8,312.3 L1811.5,312.3 L1812.1,312.3 L1812.8,312.3 L1813.4,312.3 L1814.1,312.3 L1814.8,312.3 L1815.4,312.3 L1816.1,312.3 L1816.8,312.3 L1817.4,312.3 L1818.1,312.3 L1818.7,312.3 L1819.4,312.3 L1820.1,312.3 L1820.7,312.3 L1821.4,312.3 L1822.1,312.3 L1822.7,312.3 L1823.4,312.3 L1824.0,312.3 L1824.7,312.3 L1825.4,312.3 L1826.0,312.3 L1826.7,312.3 L1827.3,312.3 L1828.0,312.3 L1828.7,312.3 L1829.3,312.3 L1830.0,312.3 L1830.7,312.3 L1831.3,312.3 L1832.0,312.3 L1832.6,312.3 L1833.3,312.3 L1834.0,312.3 L1834.6,312.3 L1835.3,312.3 L1835.9,312.3 L1836.6,312.3 L1837.3,312.3 L1837.9,312.3 L1838.6,312.3 L1839.3,312.3 L1839.9,312.3 L1840.6,312.3 L1841.2,312.3 L1841.9,312.3 L1842.6,312.3 L1843.2,312.3 L1843.9,312.3 L1844.5,312.3 L1845.2,312.3 L1845.9,312.3 L1846.5,312.3 L1847.2,312.3 L1847.9,312.3 L1848.5,312.3 L1849.2,312.3 L1849.8,312.3 L1850.5,312.3 L1851.2,312.3 L1851.8,312.3 L1852.5,312.3 L1853.1,312.3 L1853.8,312.3 L1854.5,312.3 L1855.1,312.3 L1855.8,312.3 L1856.5,312.3 L1856.5,314.5 L1167,314.5 Z" fill="#5195ce" fill-opacity="0.5"/><path d="M1167.0,312.4 L1167.7,312.4 L1168.3,312.4 L1169.0,312.4 L1169.6,312.4 L1170.3,312.4 L1171.0,312.4 L1171.6,312.4 L1172.3,312.4 L1173.0,312.4 L1173.6,312.4 L1174.3,312.4 L1174.9,312.4 L1175.6,312.4 L1176.3,312.4 L1176.9,312.4 L1177.6,312.4 L1178.2,312.4 L1178.9,312.4 L1179.6,312.4 L1180.2,312.4 L1180.9,312.4 L1181.6,312.4 L1182.2,312.4 L1182.9,312.4 L1183.5,312.4 L1184.2,312.4 L1184.9,312.4 L1185.5,312.4 L1186.2,312.4 L1186.8,312.4 L1187.5,312.4 L1188.2,312.4 L1188.8,312.4 L1189.5,312.4 L1190.2,312.4 L1190.8,312.4 L1191.5,312.4 L1192.1,312.4 L1192.8,312.4 L1193.5,312.4 L1194.1,312.4 L1194.8,312.4 L1195.5,312.4 L1196.1,312.4 L1196.8,312.4 L1197.4,312.4 L1198.1,312.4 L1198.8,312.4 L1199.4,312.4 L1200.1,312.4 L1200.7,312.4 L1201.4,312.4 L1202.1,312.4 L1202.7,312.4 L1203.4,312.4 L1204.1,312.4 L1204.7,312.4 L1205.4,312.4 L1206.0,312.4 L1206.7,312.4 L1207.4,312.4 L1208.0,312.4 L1208.7,312.4 L1209.3,312.4 L1210.0,312.4 L1210.7,312.4 L1211.3,312.4 L1212.0,312.4 L1212.7,312.4 L1213.3,312.4 L1214.0,312.4 L1214.6,312.4 L1215.3,312.4 L1216.0,312.4 L1216.6,312.4 L1217.3,312.4 L1217.9,312.4 L1218.6,312.4 L1219.3,312.4 L1219.9,312.4 L1220.6,312.4 L1221.3,312.4 L1221.9,312.4 L1222.6,312.4 L1223.2,312.4 L1223.9,312.4 L1224.6,312.4 L1225.2,312.4 L1225.9,312.4 L1226.5,312.4 L1227.2,312.4 L1227.9,312.4 L1228.5,312.4 L1229.2,312.4 L1229.9,312.4 L1230.5,312.4 L1231.2,312.4 L1231.8,312.4 L1232.5,312.4 L1233.2,312.4 L1233.8,312.4 L1234.5,312.4 L1235.2,312.4 L1235.8,312.4 L1236.5,312.4 L1237.1,312.4 L1237.8,312.4 L1238.5,312.4 L1239.1,312.4 L1239.8,312.4 L1240.4,312.4 L1241.1,312.4 L1241.8,312.4 L1242.4,312.4 L1243.1,312.4 L1243.8,312.4 L1244.4,312.4 L1245.1,312.4 L1245.7,312.4 L1246.4,312.4 L1247.1,312.4 L1247.7,312.4 L1248.4,312.4 L1249.0,312.4 L1249.7,312.4 L1250.4,312.4 L1251.0,312.4 L1251.7,312.4 L1252.4,312.4 L1253.0,312.4 L1253.7,312.4 L1254.3,312.4 L1255.0,312.4 L1255.7,312.3 L1256.3,312.1 L1257.0,311.7 L1257.6,311.2 L1258.3,310.4 L1259.0,309.6 L1259.6,308.7 L1260.3,307.6 L1261.0,306.4 L1261.6,305.2 L1262.3,303.9 L1262.9,302.5 L1263.6,301.0 L1264.3,299.6 L1264.9,298.1 L1265.6,296.5 L1266.2,295.0 L1266.9,293.5 L1267.6,292.0 L1268.2,290.5 L1268.9,289.1 L1269.6,287.7 L1270.2,286.4 L1270.9,285.2 L1271.5,284.0 L1272.2,283.0 L1272.9,282.1 L1273.5,281.2 L1274.2,280.6 L1274.9,280.0 L1275.5,279.7 L1276.2,279.5 L1276.8,279.4 L1277.5,279.4 L1278.2,279.4 L1278.8,279.4 L1279.5,279.4 L1280.1,279.4 L1280.8,279.4 L1281.5,279.4 L1282.1,279.4 L1282.8,279.4 L1283.5,279.4 L1284.1,279.4 L1284.8,279.4 L1285.4,279.4 L1286.1,279.4 L1286.8,279.4 L1287.4,279.4 L1288.1,279.4 L1288.7,279.4 L1289.4,276.1 L1290.1,274.9 L1290.7,275.2 L1291.4,276.5 L1292.1,276.5 L1292.7,276.3 L1293.4,275.0 L1294.0,275.9 L1294.7,274.2 L1295.4,274.2 L1296.0,272.8 L1296.7,273.1 L1297.3,275.2 L1298.0,274.6 L1298.7,274.9 L1299.3,273.3 L1300.0,273.5 L1300.7,274.9 L1301.3,272.8 L1302.0,273.9 L1302.6,273.3 L1303.3,272.1 L1304.0,273.7 L1304.6,272.7 L1305.3,272.0 L1306.0,271.1 L1306.6,272.7 L1307.3,273.4 L1307.9,273.7 L1308.6,271.3 L1309.3,270.8 L1309.9,271.3 L1310.6,271.5 L1311.2,270.6 L1311.9,271.6 L1312.6,272.8 L1313.2,270.8 L1313.9,270.2 L1314.6,271.4 L1315.2,272.4 L1315.9,271.9 L1316.5,272.1 L1317.2,271.8 L1317.9,270.8 L1318.5,271.7 L1319.2,270.1 L1319.8,269.1 L1320.5,270.7 L1321.2,270.3 L1321.8,268.3 L1322.5,270.7 L1323.2,270.4 L1323.8,269.2 L1324.5,270.9 L1325.1,269.6 L1325.8,267.1 L1326.5,268.5 L1327.1,262.4 L1327.8,267.6 L1328.4,267.6 L1329.1,268.8 L1329.8,265.2 L1330.4,269.4 L1331.1,266.3 L1331.8,269.5 L1332.4,263.4 L1333.1,268.0 L1333.7,269.2 L1334.4,268.8 L1335.1,267.3 L1335.7,268.5 L1336.4,269.6 L1337.0,268.8 L1337.7,267.3 L1338.4,269.8 L1339.0,268.2 L1339.7,263.8 L1340.4,266.8 L1341.0,267.6 L1341.7,268.6 L1342.3,267.4 L1343.0,267.3 L1343.7,269.1 L1344.3,266.7 L1345.0,267.2 L1345.7,267.4 L1346.3,268.1 L1347.0,266.1 L1347.6,268.9 L1348.3,266.7 L1349.0,266.7 L1349.6,266.6 L1350.3,268.9 L1350.9,269.0 L1351.6,267.6 L1352.3,266.9 L1352.9,267.5 L1353.6,269.3 L1354.3,266.7 L1354.9,267.2 L1355.6,268.9 L1356.2,268.4 L1356.9,266.4 L1357.6,268.2 L1358.2,267.2 L1358.9,269.0 L1359.5,266.6 L1360.2,268.9 L1360.9,266.3 L1361.5,268.3 L1362.2,263.2 L1362.9,267.3 L1363.5,266.4 L1364.2,266.6 L1364.8,268.6 L1365.5,268.4 L1366.2,267.4 L1366.8,268.0 L1367.5,266.4 L1368.1,267.8 L1368.8,266.4 L1369.5,266.3 L1370.1,267.5 L1370.8,269.1 L1371.5,263.4 L1372.1,268.6 L1372.8,266.9 L1373.4,268.1 L1374.1,267.4 L1374.8,268.8 L1375.4,268.3 L1376.1,266.7 L1376.7,267.3 L1377.4,266.2 L1378.1,267.1 L1378.7,267.4 L1379.4,267.6 L1380.1,267.5 L1380.7,266.8 L1381.4,266.0 L1382.0,267.2 L1382.7,266.3 L1383.4,268.5 L1384.0,268.7 L1384.7,268.7 L1385.4,266.4 L1386.0,268.4 L1386.7,266.8 L1387.3,266.1 L1388.0,268.1 L1388.7,267.6 L1389.3,265.7 L1390.0,268.3 L1390.6,267.2 L1391.3,268.1 L1392.0,266.5 L1392.6,267.0 L1393.3,268.7 L1394.0,266.7 L1394.6,268.5 L1395.3,266.2 L1395.9,268.3 L1396.6,268.5 L1397.3,267.8 L1397.9,267.3 L1398.6,266.0 L1399.2,268.1 L1399.9,266.8 L1400.6,268.3 L1401.2,266.4 L1401.9,268.3 L1402.6,266.5 L1403.2,268.2 L1403.9,268.3 L1404.5,267.1 L1405.2,266.7 L1405.9,267.6 L1406.5,266.8 L1407.2,268.1 L1407.8,268.3 L1408.5,267.4 L1409.2,266.0 L1409.8,266.8 L1410.5,267.3 L1411.2,267.6 L1411.8,266.6 L1412.5,265.4 L1413.1,266.9 L1413.8,266.9 L1414.5,264.8 L1415.1,265.5 L1415.8,269.3 L1416.4,267.8 L1417.1,264.5 L1417.8,266.0 L1418.4,265.3 L1419.1,265.7 L1419.8,264.6 L1420.4,266.4 L1421.1,265.1 L1421.7,266.9 L1422.4,265.4 L1423.1,264.6 L1423.7,262.8 L1424.4,262.2 L1425.1,261.6 L1425.7,262.5 L1426.4,261.5 L1427.0,261.6 L1427.7,262.3 L1428.4,261.1 L1429.0,261.4 L1429.7,262.6 L1430.3,262.7 L1431.0,262.6 L1431.7,261.0 L1432.3,260.6 L1433.0,260.8 L1433.7,259.6 L1434.3,260.4 L1435.0,259.7 L1435.6,259.2 L1436.3,261.1 L1437.0,259.5 L1437.6,259.5 L1438.3,259.5 L1438.9,259.5 L1439.6,259.5 L1440.3,259.5 L1440.9,259.5 L1441.6,259.5 L1442.3,259.5 L1442.9,259.5 L1443.6,259.5 L1444.2,259.5 L1444.9,259.5 L1445.6,259.5 L1446.2,259.5 L1446.9,259.5 L1447.5,259.5 L1448.2,259.5 L1448.9,259.5 L1449.5,259.5 L1450.2,259.5 L1450.9,259.5 L1451.5,259.5 L1452.2,259.5 L1452.8,259.5 L1453.5,259.5 L1454.2,259.5 L1454.8,259.5 L1455.5,259.5 L1456.1,259.5 L1456.8,259.5 L1457.5,259.5 L1458.1,259.5 L1458.8,259.5 L1459.5,259.5 L1460.1,259.5 L1460.8,259.5 L1461.4,259.5 L1462.1,259.5 L1462.8,259.5 L1463.4,259.5 L1464.1,259.5 L1464.8,259.5 L1465.4,259.5 L1466.1,259.5 L1466.7,259.5 L1467.4,259.5 L1468.1,259.5 L1468.7,259.5 L1469.4,259.5 L1470.0,259.5 L1470.7,259.5 L1471.4,259.5 L1472.0,259.5 L1472.7,259.5 L1473.4,259.5 L1474.0,259.5 L1474.7,259.5 L1475.3,259.5 L1476.0,259.5 L1476.7,259.5 L1477.3,259.5 L1478.0,259.5 L1478.6,259.5 L1479.3,259.5 L1480.0,259.5 L1480.6,259.5 L1481.3,259.5 L1482.0,259.5 L1482.6,259.5 L1483.3,259.5 L1483.9,259.5 L1484.6,259.5 L1485.3,259.5 L1485.9,259.5 L1486.6,259.5 L1487.2,259.5 L1487.9,259.5 L1488.6,259.5 L1489.2,259.5 L1489.9,259.5 L1490.6,259.5 L1491.2,259.5 L1491.9,259.5 L1492.5,259.5 L1493.2,259.5 L1493.9,259.5 L1494.5,259.5 L1495.2,259.5 L1495.8,259.5 L1496.5,259.5 L1497.2,259.5 L1497.8,259.5 L1498.5,259.5 L1499.2,259.5 L1499.8,259.5 L1500.5,259.5 L1501.1,259.5 L1501.8,259.5 L1502.5,259.5 L1503.1,259.5 L1503.8,259.5 L1504.5,259.5 L1505.1,259.5 L1505.8,259.5 L1506.4,259.5 L1507.1,259.5 L1507.8,259.5 L1508.4,259.5 L1509.1,259.5 L1509.7,259.5 L1510.4,259.5 L1511.1,259.5 L1511.7,259.5 L1512.4,259.5 L1513.1,259.5 L1513.7,259.5 L1514.4,259.5 L1515.0,259.5 L1515.7,259.5 L1516.4,259.5 L1517.0,259.5 L1517.7,259.5 L1518.3,259.5 L1519.0,259.5 L1519.7,259.5 L1520.3,259.5 L1521.0,259.5 L1521.7,259.5 L1522.3,259.5 L1523.0,259.5 L1523.6,259.5 L1524.3,259.5 L1525.0,259.5 L1525.6,259.5 L1526.3,259.5 L1526.9,259.5 L1527.6,259.5 L1528.3,259.5 L1528.9,259.5 L1529.6,259.5 L1530.3,259.5 L1530.9,259.5 L1531.6,259.5 L1532.2,259.5 L1532.9,259.5 L1533.6,259.5 L1534.2,259.5 L1534.9,259.5 L1535.5,259.5 L1536.2,259.5 L1536.9,259.5 L1537.5,259.5 L1538.2,259.5 L1538.9,259.5 L1539.5,259.5 L1540.2,259.5 L1540.8,259.5 L1541.5,259.5 L1542.2,259.5 L1542.8,259.5 L1543.5,259.5 L1544.2,259.5 L1544.8,259.5 L1545.5,259.5 L1546.1,259.5 L1546.8,259.5 L1547.5,259.5 L1548.1,259.5 L1548.8,259.5 L1549.4,259.5 L1550.1,259.5 L1550.8,259.5 L1551.4,259.5 L1552.1,259.5 L1552.8,259.5 L1553.4,259.5 L1554.1,259.5 L1554.7,259.5 L1555.4,259.5 L1556.1,259.5 L1556.7,259.5 L1557.4,259.5 L1558.0,259.5 L1558.7,259.5 L1559.4,259.5 L1560.0,259.5 L1560.7,259.5 L1561.4,259.5 L1562.0,259.5 L1562.7,259.5 L1563.3,259.5 L1564.0,259.5 L1564.7,259.5 L1565.3,259.5 L1566.0,259.5 L1566.6,259.5 L1567.3,259.5 L1568.0,259.5 L1568.6,259.5 L1569.3,259.5 L1570.0,259.5 L1570.6,259.5 L1571.3,259.5 L1571.9,259.5 L1572.6,259.5 L1573.3,259.5 L1573.9,259.5 L1574.6,259.5 L1575.2,259.5 L1575.9,259.5 L1576.6,259.5 L1577.2,259.5 L1577.9,259.5 L1578.6,259.5 L1579.2,259.5 L1579.9,259.5 L1580.5,259.5 L1581.2,259.6 L1581.9,259.6 L1582.5,259.6 L1583.2,259.6 L1583.9,259.6 L1584.5,259.6 L1585.2,259.6 L1585.8,259.6 L1586.5,259.6 L1587.2,259.6 L1587.8,259.6 L1588.5,259.6 L1589.1,259.6 L1589.8,259.6 L1590.5,259.6 L1591.1,259.6 L1591.8,259.6 L1592.5,259.6 L1593.1,259.6 L1593.8,259.6 L1594.4,259.6 L1595.1,259.6 L1595.8,259.6 L1596.4,259.6 L1597.1,259.6 L1597.7,259.6 L1598.4,259.6 L1599.1,259.6 L1599.7,259.6 L1600.4,259.6 L1601.1,259.6 L1601.7,259.6 L1602.4,259.6 L1603.0,259.6 L1603.7,259.6 L1604.4,259.6 L1605.0,259.6 L1605.7,259.6 L1606.3,259.6 L1607.0,259.6 L1607.7,259.6 L1608.3,259.6 L1609.0,259.6 L1609.7,259.6 L1610.3,259.6 L1611.0,259.6 L1611.6,259.6 L1612.3,259.6 L1613.0,259.6 L1613.6,259.6 L1614.3,259.6 L1614.9,259.6 L1615.6,259.6 L1616.3,259.6 L1616.9,259.6 L1617.6,259.6 L1618.3,259.6 L1618.9,259.6 L1619.6,259.6 L1620.2,259.6 L1620.9,259.6 L1621.6,259.6 L1622.2,259.6 L1622.9,259.6 L1623.6,259.6 L1624.2,259.6 L1624.9,259.6 L1625.5,259.6 L1626.2,259.6 L1626.9,259.6 L1627.5,259.6 L1628.2,259.6 L1628.8,259.6 L1629.5,259.6 L1630.2,259.6 L1630.8,259.6 L1631.5,259.6 L1632.2,259.6 L1632.8,259.6 L1633.5,259.6 L1634.1,260.5 L1634.8,261.5 L1635.5,262.5 L1636.1,263.5 L1636.8,264.5 L1637.4,265.4 L1638.1,266.4 L1638.8,267.4 L1639.4,267.6 L1640.1,268.6 L1640.8,270.3 L1641.4,271.4 L1642.1,270.5 L1642.7,270.9 L1643.4,272.5 L1644.1,270.7 L1644.7,271.3 L1645.4,272.9 L1646.0,271.0 L1646.7,271.0 L1647.4,271.6 L1648.0,271.8 L1648.7,270.5 L1649.4,270.3 L1650.0,273.3 L1650.7,270.8 L1651.3,272.0 L1652.0,272.8 L1652.7,272.8 L1653.3,273.1 L1654.0,270.6 L1654.6,271.0 L1655.3,270.9 L1656.0,273.0 L1656.6,272.2 L1657.3,273.8 L1658.0,272.4 L1658.6,273.4 L1659.3,272.9 L1659.9,273.9 L1660.6,271.3 L1661.3,271.1 L1661.9,271.2 L1662.6,272.9 L1663.3,271.0 L1663.9,273.0 L1664.6,273.3 L1665.2,273.9 L1665.9,273.4 L1666.6,273.5 L1667.2,272.7 L1667.9,273.2 L1668.5,271.6 L1669.2,272.5 L1669.9,271.5 L1670.5,272.3 L1671.2,272.3 L1671.9,272.2 L1672.5,273.7 L1673.2,271.8 L1673.8,273.2 L1674.5,273.8 L1675.2,271.7 L1675.8,272.8 L1676.5,273.1 L1677.1,274.4 L1677.8,274.3 L1678.5,273.4 L1679.1,272.2 L1679.8,273.6 L1680.5,274.5 L1681.1,274.1 L1681.8,274.4 L1682.4,273.4 L1683.1,272.9 L1683.8,274.0 L1684.4,274.1 L1685.1,275.2 L1685.7,272.4 L1686.4,273.9 L1687.1,272.8 L1687.7,274.7 L1688.4,274.3 L1689.1,272.6 L1689.7,272.9 L1690.4,275.6 L1691.0,272.9 L1691.7,273.9 L1692.4,274.5 L1693.0,273.2 L1693.7,272.8 L1694.3,275.5 L1695.0,274.3 L1695.7,273.0 L1696.3,269.2 L1697.0,269.2 L1697.7,269.3 L1698.3,269.4 L1699.0,269.6 L1699.6,269.7 L1700.3,269.8 L1701.0,270.0 L1701.6,270.1 L1702.3,270.3 L1703.0,270.4 L1703.6,270.6 L1704.3,270.7 L1704.9,270.9 L1705.6,271.0 L1706.3,271.2 L1706.9,271.3 L1707.6,271.4 L1708.2,271.6 L1708.9,271.7 L1709.6,271.9 L1710.2,272.3 L1710.9,272.8 L1711.6,273.4 L1712.2,274.1 L1712.9,275.0 L1713.5,275.9 L1714.2,276.9 L1714.9,278.0 L1715.5,279.1 L1716.2,280.3 L1716.8,281.6 L1717.5,282.9 L1718.2,284.3 L1718.8,285.7 L1719.5,287.1 L1720.2,288.5 L1720.8,289.9 L1721.5,291.3 L1722.1,292.8 L1722.8,294.2 L1723.5,295.6 L1724.1,297.0 L1724.8,298.3 L1725.4,299.6 L1726.1,300.9 L1726.8,302.2 L1727.4,303.4 L1728.1,304.5 L1728.8,305.6 L1729.4,306.6 L1730.1,307.5 L1730.7,308.4 L1731.4,309.2 L1732.1,309.9 L1732.7,310.5 L1733.4,311.1 L1734.0,311.5 L1734.7,311.9 L1735.4,312.1 L1736.0,312.3 L1736.7,312.3 L1737.4,312.3 L1738.0,312.3 L1738.7,312.3 L1739.3,312.3 L1740.0,312.3 L1740.7,312.3 L1741.3,312.3 L1742.0,312.3 L1742.7,312.3 L1743.3,312.3 L1744.0,312.3 L1744.6,312.3 L1745.3,312.3 L1746.0,312.3 L1746.6,312.3 L1747.3,312.3 L1747.9,312.3 L1748.6,312.3 L1749.3,312.3 L1749.9,312.3 L1750.6,312.3 L1751.3,312.3 L1751.9,312.3 L1752.6,312.3 L1753.2,312.3 L1753.9,312.3 L1754.6,312.3 L1755.2,312.3 L1755.9,312.3 L1756.5,312.3 L1757.2,312.3 L1757.9,312.3 L1758.5,312.3 L1759.2,312.3 L1759.9,312.3 L1760.5,312.3 L1761.2,312.3 L1761.8,312.3 L1762.5,312.3 L1763.2,312.3 L1763.8,312.3 L1764.5,312.3 L1765.1,312.3 L1765.8,312.3 L1766.5,312.3 L1767.1,312.3 L1767.8,312.3 L1768.5,312.3 L1769.1,312.3 L1769.8,312.3 L1770.4,312.3 L1771.1,312.3 L1771.8,312.3 L1772.4,312.3 L1773.1,312.3 L1773.7,312.3 L1774.4,312.3 L1775.1,312.3 L1775.7,312.3 L1776.4,312.3 L1777.1,312.3 L1777.7,312.3 L1778.4,312.3 L1779.0,312.3 L1779.7,312.3 L1780.4,312.3 L1781.0,312.3 L1781.7,312.3 L1782.4,312.3 L1783.0,312.3 L1783.7,312.3 L1784.3,312.3 L1785.0,312.3 L1785.7,312.3 L1786.3,312.3 L1787.0,312.3 L1787.6,312.3 L1788.3,312.3 L1789.0,312.3 L1789.6,312.3 L1790.3,312.3 L1791.0,312.3 L1791.6,312.3 L1792.3,312.3 L1792.9,312.3 L1793.6,312.3 L1794.3,312.3 L1794.9,312.3 L1795.6,312.3 L1796.2,312.3 L1796.9,312.3 L1797.6,312.3 L1798.2,312.3 L1798.9,312.3 L1799.6,312.3 L1800.2,312.3 L1800.9,312.3 L1801.5,312.3 L1802.2,312.3 L1802.9,312.3 L1803.5,312.3 L1804.2,312.3 L1804.8,312.3 L1805.5,312.3 L1806.2,312.3 L1806.8,312.3 L1807.5,312.3 L1808.2,312.3 L1808.8,312.3 L1809.5,312.3 L1810.1,312.3 L1810.8,312.3 L1811.5,312.3 L1812.1,312.3 L1812.8,312.3 L1813.4,312.3 L1814.1,312.3 L1814.8,312.3 L1815.4,312.3 L1816.1,312.3 L1816.8,312.3 L1817.4,312.3 L1818.1,312.3 L1818.7,312.3 L1819.4,312.3 L1820.1,312.3 L1820.7,312.3 L1821.4,312.3 L1822.1,312.3 L1822.7,312.3 L1823.4,312.3 L1824.0,312.3 L1824.7,312.3 L1825.4,312.3 L1826.0,312.3 L1826.7,312.3 L1827.3,312.3 L1828.0,312.3 L1828.7,312.3 L1829.3,312.3 L1830.0,312.3 L1830.7,312.3 L1831.3,312.3 L1832.0,312.3 L1832.6,312.3 L1833.3,312.3 L1834.0,312.3 L1834.6,312.3 L1835.3,312.3 L1835.9,312.3 L1836.6,312.3 L1837.3,312.3 L1837.9,312.3 L1838.6,312.3 L1839.3,312.3 L1839.9,312.3 L1840.6,312.3 L1841.2,312.3 L1841.9,312.3 L1842.6,312.3 L1843.2,312.3 L1843.9,312.3 L1844.5,312.3 L1845.2,312.3 L1845.9,312.3 L1846.5,312.3 L1847.2,312.3 L1847.9,312.3 L1848.5,312.3 L1849.2,312.3 L1849.8,312.3 L1850.5,312.3 L1851.2,312.3 L1851.8,312.3 L1852.5,312.3 L1853.1,312.3 L1853.8,312.3 L1854.5,312.3 L1855.1,312.3 L1855.8,312.3 L1856.5,312.3" fill="none" stroke="#5a9bd3" stroke-width="1" stroke-linejoin="round"/></svg>
<div class="p" style="left:1129px;top:357px;width:776px;height:149px;"></div>
<span class="t" style="left:1423.9px;top:364.8px;font-size:12.00px;color:#dcdde0;font-weight:bold;letter-spacing:0.03px;">Batterie Lade- und Entladestrom</span>
<svg width="1924" height="1079" viewBox="0 0 1924 1079"><path d="M1161.5,452.5 H1882" stroke="rgba(200,200,200,0.2)" stroke-width="1"/><text x="1156.3" y="455.8" font-size="10.40" fill="#d0d1d3" text-anchor="end" letter-spacing="0.00" stroke="#d0d1d3" stroke-width="0.3" >0 A</text><path d="M1161.5,433.5 H1882" stroke="rgba(200,200,200,0.2)" stroke-width="1"/><text x="1156.3" y="436.4" font-size="10.40" fill="#d0d1d3" text-anchor="end" letter-spacing="0.00" stroke="#d0d1d3" stroke-width="0.3" >2 A</text><path d="M1161.5,413.5 H1882" stroke="rgba(200,200,200,0.2)" stroke-width="1"/><text x="1156.3" y="417.0" font-size="10.40" fill="#d0d1d3" text-anchor="end" letter-spacing="0.00" stroke="#d0d1d3" stroke-width="0.3" >4 A</text><path d="M1161.5,394.5 H1882" stroke="rgba(200,200,200,0.2)" stroke-width="1"/><text x="1156.3" y="396.7" font-size="10.40" fill="#d0d1d3" text-anchor="end" letter-spacing="0.00" stroke="#d0d1d3" stroke-width="0.3" >6 A</text><path d="M1201.5,394 V453" stroke="rgba(200,200,200,0.2)" stroke-width="1"/><text x="1201.5" y="470.0" font-size="10.70" fill="#d0d1d3" text-anchor="middle" letter-spacing="0.00" stroke="#d0d1d3" stroke-width="0.3" >06:00</text><path d="M1281.5,394 V453" stroke="rgba(200,200,200,0.2)" stroke-width="1"/><text x="1281.5" y="470.0" font-size="10.70" fill="#d0d1d3" text-anchor="middle" letter-spacing="0.00" stroke="#d0d1d3" stroke-width="0.3" >08:00</text><path d="M1361.5,394 V453" stroke="rgba(200,200,200,0.2)" stroke-width="1"/><text x="1361.5" y="470.0" font-size="10.70" fill="#d0d1d3" text-anchor="middle" letter-spacing="0.00" stroke="#d0d1d3" stroke-width="0.3" >10:00</text><path d="M1441.5,394 V453" stroke="rgba(200,200,200,0.2)" stroke-width="1"/><text x="1441.5" y="470.0" font-size="10.70" fill="#d0d1d3" text-anchor="middle" letter-spacing="0.00" stroke="#d0d1d3" stroke-width="0.3" >12:00</text><path d="M1521.5,394 V453" stroke="rgba(200,200,200,0.2)" stroke-width="1"/><text x="1521.5" y="470.0" font-size="10.70" fill="#d0d1d3" text-anchor="middle" letter-spacing="0.00" stroke="#d0d1d3" stroke-width="0.3" >14:00</text><path d="M1601.5,394 V453" stroke="rgba(200,200,200,0.2)" stroke-width="1"/><text x="1601.5" y="470.0" font-size="10.70" fill="#d0d1d3" text-anchor="middle" letter-spacing="0.00" stroke="#d0d1d3" stroke-width="0.3" >16:00</text><path d="M1681.5,394 V453" stroke="rgba(200,200,200,0.2)" stroke-width="1"/><text x="1681.5" y="470.0" font-size="10.70" fill="#d0d1d3" text-anchor="middle" letter-spacing="0.00" stroke="#d0d1d3" stroke-width="0.3" >18:00</text><path d="M1761.5,394 V453" stroke="rgba(200,200,200,0.2)" stroke-width="1"/><text x="1761.5" y="470.0" font-size="10.70" fill="#d0d1d3" text-anchor="middle" letter-spacing="0.00" stroke="#d0d1d3" stroke-width="0.3" >20:00</text><path d="M1841.5,394 V453" stroke="rgba(200,200,200,0.2)" stroke-width="1"/><text x="1841.5" y="470.0" font-size="10.70" fill="#d0d1d3" text-anchor="middle" letter-spacing="0.00" stroke="#d0d1d3" stroke-width="0.3" >22:00</text><path d="M1161.5,448.3 L1162.2,448.3 L1162.8,448.4 L1163.5,448.4 L1164.2,448.3 L1164.8,448.4 L1165.5,448.3 L1166.2,448.4 L1166.8,448.3 L1167.5,448.3 L1168.2,447.9 L1168.8,448.3 L1169.5,448.3 L1170.2,448.3 L1170.8,448.4 L1171.5,448.3 L1172.2,448.4 L1172.8,448.3 L1173.5,448.4 L1174.2,448.3 L1174.8,448.4 L1175.5,448.3 L1176.2,448.4 L1176.8,448.3 L1177.5,448.4 L1178.2,448.4 L1178.8,448.4 L1179.5,448.3 L1180.2,448.3 L1180.8,448.4 L1181.5,448.3 L1182.2,448.3 L1182.8,448.3 L1183.5,448.3 L1184.2,448.4 L1184.8,448.3 L1185.5,448.3 L1186.2,448.3 L1186.8,448.4 L1187.5,448.3 L1188.2,448.4 L1188.8,448.3 L1189.5,448.4 L1190.2,448.4 L1190.8,448.4 L1191.5,448.4 L1192.2,448.4 L1192.8,448.3 L1193.5,448.3 L1194.2,448.3 L1194.8,448.3 L1195.5,448.4 L1196.2,448.4 L1196.8,448.3 L1197.5,448.1 L1198.2,448.3 L1198.8,448.3 L1199.5,448.4 L1200.2,448.3 L1200.8,448.4 L1201.5,448.4 L1202.2,448.4 L1202.8,448.3 L1203.5,447.9 L1204.2,448.3 L1204.8,448.3 L1205.5,448.4 L1206.2,448.3 L1206.8,448.4 L1207.5,448.3 L1208.2,448.3 L1208.8,448.4 L1209.5,448.4 L1210.2,448.4 L1210.8,448.3 L1211.5,447.9 L1212.2,448.4 L1212.8,448.3 L1213.5,448.4 L1214.2,448.4 L1214.8,448.3 L1215.5,448.4 L1216.2,448.3 L1216.8,448.3 L1217.5,448.3 L1218.2,448.3 L1218.8,448.3 L1219.5,448.3 L1220.2,448.4 L1220.8,448.4 L1221.5,448.3 L1222.2,448.3 L1222.8,448.3 L1223.5,448.3 L1224.2,448.3 L1224.8,448.3 L1225.5,448.3 L1226.2,448.4 L1226.8,448.4 L1227.5,448.3 L1228.2,448.3 L1228.8,448.3 L1229.5,448.4 L1230.2,448.3 L1230.8,448.3 L1231.5,448.4 L1232.2,448.4 L1232.8,448.4 L1233.5,448.3 L1234.2,448.4 L1234.8,448.3 L1235.5,448.4 L1236.2,448.3 L1236.8,448.4 L1237.5,448.3 L1238.2,448.3 L1238.8,448.4 L1239.5,448.3 L1240.2,448.4 L1240.8,448.4 L1241.5,448.4 L1242.2,448.3 L1242.8,448.4 L1243.5,448.3 L1244.2,448.4 L1244.8,448.3 L1245.5,448.3 L1246.2,448.3 L1246.8,448.4 L1247.5,448.3 L1248.2,448.4 L1248.8,448.3 L1249.5,448.4 L1250.2,448.3 L1250.8,448.4 L1251.5,448.3 L1252.2,448.4 L1252.8,448.3 L1253.5,448.3 L1254.2,448.3 L1254.8,448.3 L1255.5,448.3 L1256.2,448.3 L1256.8,448.3 L1257.5,448.3 L1258.2,448.4 L1258.8,448.3 L1259.5,448.4 L1260.2,448.3 L1260.8,448.4 L1261.5,447.7 L1262.2,448.2 L1262.8,448.1 L1263.5,447.8 L1264.2,448.2 L1264.8,448.0 L1265.5,447.7 L1266.2,448.0 L1266.8,447.9 L1267.5,447.8 L1268.2,447.2 L1268.8,447.6 L1269.5,446.9 L1270.2,446.9 L1270.8,447.4 L1271.5,446.7 L1272.2,446.8 L1272.8,447.1 L1273.5,446.7 L1274.2,447.4 L1274.8,447.3 L1275.5,447.3 L1276.2,447.4 L1276.8,446.7 L1277.5,447.5 L1278.2,447.3 L1278.8,447.1 L1279.5,446.8 L1280.2,447.1 L1280.8,447.4 L1281.5,447.5 L1282.2,447.9 L1282.8,447.5 L1283.5,447.5 L1284.2,447.8 L1284.8,447.8 L1285.5,448.1 L1286.2,447.8 L1286.8,448.4 L1287.5,448.4 L1288.2,448.3 L1288.8,448.4 L1289.5,448.4 L1290.2,448.4 L1290.8,448.3 L1291.5,448.3 L1292.2,448.4 L1292.8,448.3 L1293.5,448.3 L1294.2,448.3 L1294.8,448.4 L1295.5,448.4 L1296.2,448.3 L1296.8,448.4 L1297.5,448.4 L1298.2,448.3 L1298.8,448.4 L1299.5,448.3 L1300.2,448.3 L1300.8,448.4 L1301.5,448.4 L1302.2,448.3 L1302.8,448.4 L1303.5,448.3 L1304.2,448.3 L1304.8,448.4 L1305.5,447.9 L1306.2,448.3 L1306.8,448.3 L1307.5,448.4 L1308.2,448.3 L1308.8,448.3 L1309.5,448.3 L1310.2,448.4 L1310.8,448.4 L1311.5,448.4 L1312.2,448.3 L1312.8,448.4 L1313.5,448.4 L1314.2,448.3 L1314.8,448.3 L1315.5,448.3 L1316.2,448.3 L1316.8,448.3 L1317.5,448.3 L1318.2,448.4 L1318.8,448.3 L1319.5,448.3 L1320.2,448.4 L1320.8,448.3 L1321.5,448.8 L1322.2,449.0 L1322.8,449.0 L1323.5,449.1 L1324.2,449.0 L1324.8,449.0 L1325.5,449.1 L1326.2,448.9 L1326.8,449.1 L1327.5,448.4 L1328.2,449.0 L1328.8,449.0 L1329.5,449.0 L1330.2,449.1 L1330.8,449.1 L1331.5,448.6 L1332.2,449.0 L1332.8,449.0 L1333.5,448.9 L1334.2,449.0 L1334.8,449.1 L1335.5,449.0 L1336.2,449.0 L1336.8,449.0 L1337.5,449.0 L1338.2,449.0 L1338.8,449.1 L1339.5,449.0 L1340.2,449.1 L1340.8,449.0 L1341.5,449.1 L1342.2,449.0 L1342.8,449.0 L1343.5,449.0 L1344.2,449.0 L1344.8,449.1 L1345.5,449.1 L1346.2,449.0 L1346.8,449.0 L1347.5,449.0 L1348.2,448.9 L1348.8,448.6 L1349.5,449.0 L1350.2,449.0 L1350.8,448.9 L1351.5,449.0 L1352.2,449.0 L1352.8,449.0 L1353.5,449.0 L1354.2,449.0 L1354.8,449.0 L1355.5,449.0 L1356.2,449.0 L1356.8,449.0 L1357.5,449.0 L1358.2,449.0 L1358.8,449.0 L1359.5,449.1 L1360.2,449.0 L1360.8,449.1 L1361.5,449.1 L1362.2,449.0 L1362.8,448.9 L1363.5,449.0 L1364.2,449.0 L1364.8,449.0 L1365.5,449.0 L1366.2,449.1 L1366.8,449.1 L1367.5,449.0 L1368.2,449.0 L1368.8,449.0 L1369.5,449.0 L1370.2,449.0 L1370.8,449.0 L1371.5,449.0 L1372.2,449.1 L1372.8,448.9 L1373.5,449.0 L1374.2,449.0 L1374.8,449.0 L1375.5,449.0 L1376.2,449.0 L1376.8,449.0 L1377.5,449.0 L1378.2,449.0 L1378.8,449.0 L1379.5,448.9 L1380.2,449.0 L1380.8,449.0 L1381.5,448.4 L1382.2,449.1 L1382.8,448.9 L1383.5,449.1 L1384.2,449.0 L1384.8,449.0 L1385.5,449.0 L1386.2,449.0 L1386.8,449.1 L1387.5,449.0 L1388.2,449.1 L1388.8,449.0 L1389.5,449.0 L1390.2,449.1 L1390.8,449.0 L1391.5,449.0 L1392.2,449.1 L1392.8,448.9 L1393.5,449.1 L1394.2,449.0 L1394.8,449.1 L1395.5,449.0 L1396.2,449.0 L1396.8,449.1 L1397.5,449.0 L1398.2,449.0 L1398.8,449.0 L1399.5,449.0 L1400.2,449.0 L1400.8,449.0 L1401.5,449.0 L1402.2,449.0 L1402.8,449.1 L1403.5,449.0 L1404.2,449.0 L1404.8,449.0 L1405.5,449.0 L1406.2,448.9 L1406.8,449.1 L1407.5,448.9 L1408.2,449.1 L1408.8,448.7 L1409.5,448.9 L1410.2,449.0 L1410.8,449.1 L1411.5,449.0 L1412.2,449.1 L1412.8,449.0 L1413.5,448.9 L1414.2,449.0 L1414.8,448.9 L1415.5,449.0 L1416.2,449.0 L1416.8,449.0 L1417.5,448.9 L1418.2,449.0 L1418.8,449.1 L1419.5,449.1 L1420.2,449.1 L1420.8,449.0 L1421.5,448.3 L1422.2,449.0 L1422.8,449.0 L1423.5,449.0 L1424.2,448.9 L1424.8,449.0 L1425.5,449.1 L1426.2,449.0 L1426.8,449.0 L1427.5,449.0 L1428.2,448.4 L1428.8,449.0 L1429.5,449.0 L1430.2,449.0 L1430.8,449.0 L1431.5,449.0 L1432.2,449.0 L1432.8,449.0 L1433.5,449.0 L1434.2,449.0 L1434.8,448.9 L1435.5,449.0 L1436.2,449.0 L1436.8,449.0 L1437.5,449.0 L1438.2,449.0 L1438.8,449.0 L1439.5,448.7 L1440.2,448.9 L1440.8,449.0 L1441.5,448.9 L1442.2,449.0 L1442.8,449.0 L1443.5,449.0 L1444.2,449.0 L1444.8,449.0 L1445.5,448.5 L1446.2,448.9 L1446.8,449.0 L1447.5,449.0 L1448.2,449.0 L1448.8,449.0 L1449.5,449.0 L1450.2,448.9 L1450.8,448.7 L1451.5,449.0 L1452.2,448.9 L1452.8,449.1 L1453.5,449.0 L1454.2,448.9 L1454.8,449.0 L1455.5,449.0 L1456.2,448.8 L1456.8,449.0 L1457.5,448.9 L1458.2,449.0 L1458.8,449.1 L1459.5,449.0 L1460.2,449.1 L1460.8,449.0 L1461.5,449.0 L1462.2,449.1 L1462.8,449.0 L1463.5,448.9 L1464.2,448.9 L1464.8,448.5 L1465.5,449.0 L1466.2,449.0 L1466.8,449.1 L1467.5,449.0 L1468.2,449.0 L1468.8,449.0 L1469.5,449.1 L1470.2,449.0 L1470.8,449.0 L1471.5,449.0 L1472.2,448.9 L1472.8,449.0 L1473.5,449.1 L1474.2,449.0 L1474.8,449.0 L1475.5,448.9 L1476.2,449.0 L1476.8,449.0 L1477.5,449.0 L1478.2,449.0 L1478.8,449.0 L1479.5,449.1 L1480.2,449.0 L1480.8,449.0 L1481.5,449.1 L1482.2,449.0 L1482.8,449.0 L1483.5,449.0 L1484.2,449.0 L1484.8,449.0 L1485.5,449.0 L1486.2,449.1 L1486.8,448.9 L1487.5,449.0 L1488.2,449.0 L1488.8,449.0 L1489.5,449.0 L1490.2,449.1 L1490.8,449.0 L1491.5,449.0 L1492.2,448.9 L1492.8,449.0 L1493.5,449.1 L1494.2,449.1 L1494.8,449.0 L1495.5,449.0 L1496.2,449.1 L1496.8,448.9 L1497.5,449.1 L1498.2,449.0 L1498.8,449.0 L1499.5,448.7 L1500.2,448.9 L1500.8,449.0 L1501.5,449.0 L1502.2,449.0 L1502.8,449.0 L1503.5,448.9 L1504.2,449.1 L1504.8,449.1 L1505.5,449.1 L1506.2,449.0 L1506.8,448.9 L1507.5,449.1 L1508.2,449.0 L1508.8,448.9 L1509.5,449.0 L1510.2,448.9 L1510.8,449.0 L1511.5,449.1 L1512.2,448.9 L1512.8,449.1 L1513.5,449.0 L1514.2,448.9 L1514.8,449.1 L1515.5,449.0 L1516.2,448.9 L1516.8,449.1 L1517.5,448.9 L1518.2,449.0 L1518.8,449.0 L1519.5,449.0 L1520.2,449.1 L1520.8,449.1 L1521.5,449.1 L1522.2,449.1 L1522.8,448.4 L1523.5,449.1 L1524.2,449.0 L1524.8,449.1 L1525.5,449.1 L1526.2,449.0 L1526.8,449.0 L1527.5,449.0 L1528.2,449.0 L1528.8,449.1 L1529.5,449.0 L1530.2,449.1 L1530.8,449.0 L1531.5,449.1 L1532.2,449.0 L1532.8,449.1 L1533.5,449.0 L1534.2,449.1 L1534.8,449.1 L1535.5,449.0 L1536.2,449.0 L1536.8,449.0 L1537.5,449.0 L1538.2,448.9 L1538.8,449.1 L1539.5,448.9 L1540.2,449.0 L1540.8,448.3 L1541.5,449.0 L1542.2,449.1 L1542.8,449.0 L1543.5,449.0 L1544.2,449.1 L1544.8,449.1 L1545.5,449.0 L1546.2,449.1 L1546.8,449.1 L1547.5,449.0 L1548.2,449.1 L1548.8,449.0 L1549.5,449.0 L1550.2,449.1 L1550.8,449.0 L1551.5,449.1 L1552.2,449.0 L1552.8,449.0 L1553.5,449.1 L1554.2,449.0 L1554.8,449.0 L1555.5,449.0 L1556.2,449.1 L1556.8,448.5 L1557.5,449.0 L1558.2,449.1 L1558.8,449.0 L1559.5,449.0 L1560.2,449.0 L1560.8,449.1 L1561.5,448.9 L1562.2,449.0 L1562.8,448.3 L1563.5,449.1 L1564.2,449.1 L1564.8,448.6 L1565.5,449.0 L1566.2,449.1 L1566.8,449.0 L1567.5,449.0 L1568.2,449.0 L1568.8,449.1 L1569.5,449.0 L1570.2,449.0 L1570.8,449.0 L1571.5,449.0 L1572.2,449.1 L1572.8,449.0 L1573.5,449.0 L1574.2,449.0 L1574.8,449.0 L1575.5,449.0 L1576.2,449.0 L1576.8,449.0 L1577.5,449.0 L1578.2,449.0 L1578.8,449.0 L1579.5,449.1 L1580.2,448.9 L1580.8,449.0 L1581.5,449.0 L1582.2,449.0 L1582.8,449.0 L1583.5,449.1 L1584.2,448.9 L1584.8,448.9 L1585.5,449.0 L1586.2,448.4 L1586.8,449.0 L1587.5,449.0 L1588.2,448.9 L1588.8,449.0 L1589.5,449.0 L1590.2,449.0 L1590.8,449.0 L1591.5,449.0 L1592.2,449.0 L1592.8,449.0 L1593.5,449.1 L1594.2,449.1 L1594.8,449.0 L1595.5,449.0 L1596.2,449.0 L1596.8,449.0 L1597.5,449.0 L1598.2,449.0 L1598.8,449.0 L1599.5,449.0 L1600.2,449.0 L1600.8,449.0 L1601.5,448.6 L1602.2,449.0 L1602.8,449.0 L1603.5,449.0 L1604.2,449.0 L1604.8,449.1 L1605.5,449.0 L1606.2,449.1 L1606.8,449.0 L1607.5,449.1 L1608.2,448.9 L1608.8,449.1 L1609.5,449.0 L1610.2,449.0 L1610.8,449.0 L1611.5,449.0 L1612.2,449.0 L1612.8,449.0 L1613.5,448.9 L1614.2,448.4 L1614.8,449.0 L1615.5,448.9 L1616.2,449.0 L1616.8,449.0 L1617.5,449.0 L1618.2,449.0 L1618.8,449.0 L1619.5,449.0 L1620.2,449.0 L1620.8,449.0 L1621.5,449.0 L1622.2,449.0 L1622.8,449.0 L1623.5,449.1 L1624.2,449.0 L1624.8,449.0 L1625.5,449.1 L1626.2,448.6 L1626.8,449.0 L1627.5,448.9 L1628.2,449.0 L1628.8,449.0 L1629.5,449.0 L1630.2,449.0 L1630.8,449.0 L1631.5,449.0 L1632.2,449.1 L1632.8,449.0 L1633.5,449.0 L1634.2,448.9 L1634.8,449.0 L1635.5,448.9 L1636.2,449.0 L1636.8,449.1 L1637.5,448.9 L1638.2,449.0 L1638.8,448.9 L1639.5,449.0 L1640.2,448.9 L1640.8,449.1 L1641.5,449.0 L1642.2,449.1 L1642.8,449.0 L1643.5,449.0 L1644.2,449.0 L1644.8,449.0 L1645.5,449.0 L1646.2,449.1 L1646.8,449.0 L1647.5,449.0 L1648.2,449.0 L1648.8,449.0 L1649.5,449.0 L1650.2,449.0 L1650.8,449.1 L1651.5,449.0 L1652.2,449.1 L1652.8,449.0 L1653.5,449.0 L1654.2,448.5 L1654.8,449.0 L1655.5,449.0 L1656.2,449.0 L1656.8,448.9 L1657.5,449.0 L1658.2,449.0 L1658.8,448.9 L1659.5,448.9 L1660.2,449.0 L1660.8,449.1 L1661.5,449.0 L1662.2,448.9 L1662.8,449.0 L1663.5,448.9 L1664.2,448.9 L1664.8,449.0 L1665.5,449.1 L1666.2,448.9 L1666.8,449.0 L1667.5,449.1 L1668.2,449.1 L1668.8,449.0 L1669.5,448.4 L1670.2,448.3 L1670.8,448.4 L1671.5,448.3 L1672.2,448.4 L1672.8,448.4 L1673.5,448.4 L1674.2,448.4 L1674.8,448.3 L1675.5,448.4 L1676.2,448.4 L1676.8,448.3 L1677.5,448.4 L1678.2,448.3 L1678.8,448.3 L1679.5,448.3 L1680.2,448.4 L1680.8,448.4 L1681.5,448.4 L1682.2,448.3 L1682.8,448.4 L1683.5,448.4 L1684.2,448.4 L1684.8,448.3 L1685.5,448.3 L1686.2,448.3 L1686.8,448.4 L1687.5,448.4 L1688.2,448.3 L1688.8,448.3 L1689.5,448.3 L1690.2,448.3 L1690.8,448.4 L1691.5,448.4 L1692.2,448.3 L1692.8,448.3 L1693.5,448.3 L1694.2,448.3 L1694.8,447.8 L1695.5,448.3 L1696.2,448.3 L1696.8,448.3 L1697.5,448.3 L1698.2,448.3 L1698.8,448.4 L1699.5,448.3 L1700.2,448.0 L1700.8,448.4 L1701.5,447.9 L1702.2,448.3 L1702.8,448.3 L1703.5,448.3 L1704.2,448.3 L1704.8,447.7 L1705.5,448.3 L1706.2,448.4 L1706.8,448.3 L1707.5,448.4 L1708.2,448.3 L1708.8,448.3 L1709.5,448.4 L1710.2,448.3 L1710.8,448.3 L1711.5,448.4 L1712.2,448.3 L1712.8,448.3 L1713.5,448.3 L1714.2,448.3 L1714.8,448.3 L1715.5,448.3 L1716.2,448.4 L1716.8,448.4 L1717.5,448.3 L1718.2,448.3 L1718.8,448.3 L1719.5,448.4 L1720.2,448.4 L1720.8,448.4 L1721.5,448.4 L1722.2,448.3 L1722.8,448.4 L1723.5,448.3 L1724.2,448.4 L1724.8,448.3 L1725.5,448.3 L1726.2,448.3 L1726.8,448.3 L1727.5,448.3 L1728.2,448.3 L1728.8,448.3 L1729.5,448.4 L1730.2,448.4 L1730.8,448.4 L1731.5,448.3 L1732.2,448.4 L1732.8,448.3 L1733.5,448.4 L1734.2,448.4 L1734.8,448.3 L1735.5,448.3 L1736.2,448.3 L1736.8,448.3 L1737.5,448.4 L1738.2,448.4 L1738.8,448.3 L1739.5,448.3 L1740.2,448.4 L1740.8,447.8 L1741.5,448.3 L1742.2,448.4 L1742.8,448.3 L1743.5,448.4 L1744.2,448.3 L1744.8,448.4 L1745.5,448.3 L1746.2,448.3 L1746.8,448.3 L1747.5,448.4 L1748.2,448.3 L1748.8,448.3 L1749.5,448.3 L1750.2,448.3 L1750.8,448.4 L1751.5,448.3 L1752.2,448.3 L1752.8,448.3 L1753.5,447.9 L1754.2,448.4 L1754.8,448.4 L1755.5,448.3 L1756.2,448.3 L1756.8,448.3 L1757.5,448.3 L1758.2,448.3 L1758.8,448.3 L1759.5,448.4 L1760.2,448.3 L1760.8,448.4 L1761.5,448.4 L1762.2,448.3 L1762.8,448.3 L1763.5,448.3 L1764.2,448.3 L1764.8,448.4 L1765.5,448.3 L1766.2,448.3 L1766.8,448.3 L1767.5,448.4 L1768.2,447.9 L1768.8,448.3 L1769.5,448.4 L1770.2,448.3 L1770.8,448.3 L1771.5,448.3 L1772.2,448.4 L1772.8,448.3 L1773.5,448.4 L1774.2,448.4 L1774.8,448.3 L1775.5,448.3 L1776.2,448.4 L1776.8,448.4 L1777.5,448.3 L1778.2,448.3 L1778.8,448.3 L1779.5,448.3 L1780.2,448.3 L1780.8,448.3 L1781.5,448.4 L1782.2,448.3 L1782.8,448.3 L1783.5,448.3 L1784.2,448.3 L1784.8,448.4 L1785.5,448.4 L1786.2,448.4 L1786.8,448.3 L1787.5,448.3 L1788.2,448.3 L1788.8,448.3 L1789.5,448.4 L1790.2,448.4 L1790.8,448.3 L1791.5,448.4 L1792.2,448.3 L1792.8,448.3 L1793.5,448.3 L1794.2,448.3 L1794.8,448.4 L1795.5,448.3 L1796.2,448.4 L1796.8,448.3 L1797.5,448.1 L1798.2,448.3 L1798.8,448.3 L1799.5,448.3 L1800.2,448.4 L1800.8,448.3 L1801.5,448.3 L1802.2,448.4 L1802.8,448.4 L1803.5,448.3 L1804.2,448.4 L1804.8,448.3 L1805.5,448.3 L1806.2,448.4 L1806.8,448.3 L1807.5,448.3 L1808.2,448.4 L1808.8,448.3 L1809.5,448.4 L1810.2,448.4 L1810.8,448.3 L1811.5,447.8 L1812.2,447.9 L1812.8,448.3 L1813.5,448.4 L1814.2,448.4 L1814.8,448.3 L1815.5,448.3 L1816.2,448.3 L1816.8,448.4 L1817.5,448.3 L1818.2,448.3 L1818.8,448.3 L1819.5,448.4 L1820.2,448.3 L1820.8,448.3 L1821.5,448.3 L1822.2,448.3 L1822.8,448.4 L1823.5,448.3 L1824.2,448.4 L1824.8,448.3 L1825.5,448.3 L1826.2,448.4 L1826.8,447.8 L1827.5,448.3 L1828.2,448.3 L1828.8,448.4 L1829.5,448.4 L1830.2,448.3 L1830.8,448.3 L1831.5,448.3 L1832.2,448.4 L1832.8,448.3 L1833.5,448.4 L1834.2,448.3 L1834.8,448.4 L1835.5,448.3 L1836.2,448.0 L1836.8,448.4 L1837.5,448.4 L1838.2,448.4 L1838.8,448.3 L1839.5,448.4 L1840.2,448.3 L1840.8,448.4 L1841.5,448.3 L1842.2,448.4 L1842.8,448.3 L1843.5,448.3 L1844.2,448.4 L1844.8,448.3 L1845.5,448.3 L1846.2,448.4 L1846.8,448.3 L1847.5,448.3 L1848.2,448.3 L1848.8,448.4 L1849.5,448.4 L1850.2,448.3 L1850.8,448.4 L1851.5,448.3 L1852.2,448.4 L1852.8,448.4 L1853.5,448.4 L1854.2,448.3 L1854.8,448.3 L1855.5,448.3 L1856.2,448.4" fill="none" stroke="#f2b48c" stroke-opacity="0.9" stroke-width="1.1" stroke-linejoin="round"/><path d="M1161.5,453.3 L1162.2,453.3 L1162.8,453.3 L1163.5,453.3 L1164.2,453.3 L1164.8,453.3 L1165.5,453.3 L1166.2,453.3 L1166.8,453.3 L1167.5,453.3 L1168.2,453.3 L1168.8,453.3 L1169.5,453.3 L1170.2,453.3 L1170.8,453.3 L1171.5,453.3 L1172.2,453.3 L1172.8,453.3 L1173.5,453.3 L1174.2,453.3 L1174.8,453.3 L1175.5,453.3 L1176.2,453.3 L1176.8,453.3 L1177.5,453.3 L1178.2,453.3 L1178.8,453.3 L1179.5,453.3 L1180.2,453.3 L1180.8,453.3 L1181.5,453.3 L1182.2,453.3 L1182.8,453.3 L1183.5,453.3 L1184.2,453.3 L1184.8,453.3 L1185.5,453.3 L1186.2,453.3 L1186.8,453.3 L1187.5,453.3 L1188.2,453.3 L1188.8,453.3 L1189.5,453.3 L1190.2,453.3 L1190.8,453.3 L1191.5,453.3 L1192.2,453.3 L1192.8,453.3 L1193.5,453.3 L1194.2,453.3 L1194.8,453.3 L1195.5,453.3 L1196.2,453.3 L1196.8,453.3 L1197.5,453.3 L1198.2,453.3 L1198.8,453.3 L1199.5,453.3 L1200.2,453.3 L1200.8,453.3 L1201.5,453.3 L1202.2,453.3 L1202.8,453.3 L1203.5,453.3 L1204.2,453.3 L1204.8,453.3 L1205.5,453.3 L1206.2,453.3 L1206.8,453.3 L1207.5,453.3 L1208.2,453.3 L1208.8,453.3 L1209.5,453.3 L1210.2,453.3 L1210.8,453.3 L1211.5,453.3 L1212.2,453.3 L1212.8,453.3 L1213.5,453.3 L1214.2,453.3 L1214.8,453.3 L1215.5,453.3 L1216.2,453.3 L1216.8,453.3 L1217.5,453.3 L1218.2,453.3 L1218.8,453.3 L1219.5,453.3 L1220.2,453.3 L1220.8,453.3 L1221.5,453.3 L1222.2,453.3 L1222.8,453.3 L1223.5,453.3 L1224.2,453.3 L1224.8,453.3 L1225.5,453.3 L1226.2,453.3 L1226.8,453.3 L1227.5,453.3 L1228.2,453.3 L1228.8,453.3 L1229.5,453.3 L1230.2,453.3 L1230.8,453.3 L1231.5,453.3 L1232.2,453.3 L1232.8,453.3 L1233.5,453.3 L1234.2,453.3 L1234.8,453.3 L1235.5,453.3 L1236.2,453.3 L1236.8,453.3 L1237.5,453.3 L1238.2,453.3 L1238.8,453.3 L1239.5,453.3 L1240.2,453.3 L1240.8,453.3 L1241.5,453.3 L1242.2,453.3 L1242.8,453.3 L1243.5,453.3 L1244.2,453.3 L1244.8,453.3 L1245.5,453.3 L1246.2,453.3 L1246.8,453.3 L1247.5,453.3 L1248.2,453.3 L1248.8,453.3 L1249.5,453.3 L1250.2,453.3 L1250.8,453.3 L1251.5,453.3 L1252.2,453.3 L1252.8,453.3 L1253.5,453.3 L1254.2,453.3 L1254.8,453.3 L1255.5,453.3 L1256.2,453.3 L1256.8,453.3 L1257.5,453.3 L1258.2,453.3 L1258.8,453.3 L1259.5,453.3 L1260.2,453.3 L1260.8,453.3 L1261.5,453.3 L1262.2,453.3 L1262.8,453.3 L1263.5,453.3 L1264.2,453.3 L1264.8,453.3 L1265.5,453.3 L1266.2,453.3 L1266.8,453.3 L1267.5,453.3 L1268.2,453.3 L1268.8,453.3 L1269.5,453.3 L1270.2,453.3 L1270.8,453.3 L1271.5,453.3 L1272.2,453.3 L1272.8,453.3 L1273.5,453.3 L1274.2,453.3 L1274.8,453.3 L1275.5,453.3 L1276.2,453.3 L1276.8,453.3 L1277.5,453.3 L1278.2,453.3 L1278.8,453.3 L1279.5,453.3 L1280.2,453.3 L1280.8,453.3 L1281.5,453.3 L1282.2,453.3 L1282.8,453.3 L1283.5,453.3 L1284.2,453.3 L1284.8,453.3 L1285.5,453.3 L1286.2,453.3 L1286.8,453.3 L1287.5,453.3 L1288.2,453.3 L1288.8,453.3 L1289.5,453.3 L1290.2,453.3 L1290.8,453.3 L1291.5,453.3 L1292.2,453.3 L1292.8,453.3 L1293.5,453.3 L1294.2,453.3 L1294.8,453.3 L1295.5,451.9 L1296.2,451.8 L1296.8,451.7 L1297.5,451.6 L1298.2,451.5 L1298.8,451.4 L1299.5,451.3 L1300.2,451.2 L1300.8,451.1 L1301.5,451.0 L1302.2,450.9 L1302.8,450.8 L1303.5,450.7 L1304.2,450.6 L1304.8,450.5 L1305.5,450.4 L1306.2,450.3 L1306.8,450.2 L1307.5,450.1 L1308.2,449.9 L1308.8,449.8 L1309.5,449.8 L1310.2,449.7 L1310.8,449.6 L1311.5,449.5 L1312.2,449.4 L1312.8,449.4 L1313.5,449.4 L1314.2,449.4 L1314.8,449.6 L1315.5,449.3 L1316.2,449.2 L1316.8,449.2 L1317.5,449.2 L1318.2,449.2 L1318.8,449.2 L1319.5,449.2 L1320.2,449.2 L1320.8,449.7 L1321.5,450.3 L1322.2,449.4 L1322.8,449.2 L1323.5,449.0 L1324.2,448.6 L1324.8,448.1 L1325.5,447.5 L1326.2,447.0 L1326.8,446.7 L1327.5,446.3 L1328.2,445.9 L1328.8,445.4 L1329.5,444.9 L1330.2,444.6 L1330.8,444.2 L1331.5,443.9 L1332.2,443.7 L1332.8,443.4 L1333.5,443.1 L1334.2,442.9 L1334.8,442.6 L1335.5,442.2 L1336.2,441.8 L1336.8,442.1 L1337.5,442.5 L1338.2,443.0 L1338.8,443.4 L1339.5,443.8 L1340.2,441.5 L1340.8,439.1 L1341.5,438.3 L1342.2,434.3 L1342.8,433.9 L1343.5,433.5 L1344.2,433.2 L1344.8,432.8 L1345.5,432.4 L1346.2,432.1 L1346.8,431.8 L1347.5,431.4 L1348.2,433.3 L1348.8,430.6 L1349.5,430.1 L1350.2,429.7 L1350.8,429.2 L1351.5,428.7 L1352.2,428.3 L1352.8,427.8 L1353.5,427.4 L1354.2,427.0 L1354.8,434.6 L1355.5,426.1 L1356.2,425.6 L1356.8,425.2 L1357.5,424.7 L1358.2,424.2 L1358.8,423.7 L1359.5,423.3 L1360.2,422.9 L1360.8,422.4 L1361.5,428.1 L1362.2,421.3 L1362.8,420.9 L1363.5,420.4 L1364.2,420.0 L1364.8,419.6 L1365.5,419.2 L1366.2,418.8 L1366.8,418.6 L1367.5,418.3 L1368.2,418.0 L1368.8,417.6 L1369.5,417.3 L1370.2,416.9 L1370.8,416.7 L1371.5,416.5 L1372.2,416.6 L1372.8,416.3 L1373.5,415.9 L1374.2,416.1 L1374.8,418.5 L1375.5,414.3 L1376.2,414.1 L1376.8,413.9 L1377.5,414.0 L1378.2,414.0 L1378.8,413.9 L1379.5,414.4 L1380.2,414.5 L1380.8,414.9 L1381.5,415.5 L1382.2,413.2 L1382.8,412.9 L1383.5,412.9 L1384.2,413.0 L1384.8,413.4 L1385.5,414.7 L1386.2,416.7 L1386.8,420.7 L1387.5,424.4 L1388.2,427.9 L1388.8,431.0 L1389.5,432.1 L1390.2,424.2 L1390.8,417.9 L1391.5,423.8 L1392.2,422.9 L1392.8,427.7 L1393.5,432.3 L1394.2,426.1 L1394.8,421.1 L1395.5,428.9 L1396.2,433.7 L1396.8,431.4 L1397.5,428.6 L1398.2,426.9 L1398.8,430.7 L1399.5,427.0 L1400.2,427.9 L1400.8,422.3 L1401.5,421.3 L1402.2,428.4 L1402.8,428.7 L1403.5,430.3 L1404.2,433.0 L1404.8,433.8 L1405.5,432.9 L1406.2,430.1 L1406.8,425.3 L1407.5,418.8 L1408.2,417.7 L1408.8,413.7 L1409.5,415.6 L1410.2,417.2 L1410.8,415.1 L1411.5,416.6 L1412.2,417.4 L1412.8,421.7 L1413.5,427.4 L1414.2,423.1 L1414.8,418.6 L1415.5,421.5 L1416.2,420.6 L1416.8,421.0 L1417.5,421.6 L1418.2,422.1 L1418.8,423.2 L1419.5,424.6 L1420.2,422.9 L1420.8,423.3 L1421.5,423.7 L1422.2,424.0 L1422.8,424.5 L1423.5,424.9 L1424.2,425.3 L1424.8,425.6 L1425.5,425.9 L1426.2,426.2 L1426.8,426.5 L1427.5,426.7 L1428.2,427.0 L1428.8,427.3 L1429.5,427.6 L1430.2,427.9 L1430.8,428.1 L1431.5,428.3 L1432.2,428.5 L1432.8,428.8 L1433.5,429.0 L1434.2,429.2 L1434.8,429.4 L1435.5,429.7 L1436.2,429.9 L1436.8,430.1 L1437.5,430.3 L1438.2,430.4 L1438.8,430.6 L1439.5,430.8 L1440.2,431.0 L1440.8,431.2 L1441.5,431.3 L1442.2,431.5 L1442.8,431.7 L1443.5,431.8 L1444.2,432.0 L1444.8,432.1 L1445.5,432.3 L1446.2,432.5 L1446.8,432.6 L1447.5,432.8 L1448.2,432.9 L1448.8,433.5 L1449.5,440.3 L1450.2,436.3 L1450.8,436.5 L1451.5,436.7 L1452.2,436.8 L1452.8,437.0 L1453.5,437.1 L1454.2,437.2 L1454.8,437.4 L1455.5,437.5 L1456.2,437.6 L1456.8,437.7 L1457.5,437.8 L1458.2,437.9 L1458.8,438.0 L1459.5,438.1 L1460.2,438.1 L1460.8,438.2 L1461.5,438.3 L1462.2,438.3 L1462.8,438.2 L1463.5,438.0 L1464.2,438.6 L1464.8,438.1 L1465.5,438.7 L1466.2,438.8 L1466.8,438.9 L1467.5,439.5 L1468.2,439.8 L1468.8,439.6 L1469.5,439.5 L1470.2,439.6 L1470.8,439.7 L1471.5,439.8 L1472.2,439.8 L1472.8,439.9 L1473.5,440.0 L1474.2,440.0 L1474.8,440.1 L1475.5,440.2 L1476.2,440.2 L1476.8,440.3 L1477.5,440.4 L1478.2,440.4 L1478.8,440.5 L1479.5,440.5 L1480.2,440.6 L1480.8,440.6 L1481.5,440.6 L1482.2,440.6 L1482.8,440.6 L1483.5,440.6 L1484.2,440.6 L1484.8,440.6 L1485.5,440.6 L1486.2,440.6 L1486.8,440.6 L1487.5,440.6 L1488.2,440.7 L1488.8,440.7 L1489.5,440.7 L1490.2,440.8 L1490.8,440.8 L1491.5,440.9 L1492.2,440.9 L1492.8,441.0 L1493.5,441.0 L1494.2,441.1 L1494.8,441.1 L1495.5,441.2 L1496.2,441.3 L1496.8,441.3 L1497.5,441.4 L1498.2,441.4 L1498.8,441.5 L1499.5,441.5 L1500.2,441.5 L1500.8,441.6 L1501.5,441.6 L1502.2,441.7 L1502.8,441.7 L1503.5,441.8 L1504.2,441.8 L1504.8,441.8 L1505.5,441.9 L1506.2,441.9 L1506.8,441.9 L1507.5,442.0 L1508.2,442.0 L1508.8,442.1 L1509.5,442.1 L1510.2,442.2 L1510.8,442.2 L1511.5,442.2 L1512.2,442.2 L1512.8,442.1 L1513.5,442.1 L1514.2,442.1 L1514.8,442.2 L1515.5,442.2 L1516.2,442.2 L1516.8,442.3 L1517.5,442.3 L1518.2,442.3 L1518.8,442.3 L1519.5,442.3 L1520.2,442.3 L1520.8,442.3 L1521.5,442.3 L1522.2,442.3 L1522.8,442.3 L1523.5,442.3 L1524.2,442.4 L1524.8,442.4 L1525.5,442.5 L1526.2,442.4 L1526.8,442.4 L1527.5,442.3 L1528.2,442.3 L1528.8,442.2 L1529.5,442.1 L1530.2,442.1 L1530.8,442.2 L1531.5,442.3 L1532.2,442.4 L1532.8,442.5 L1533.5,442.6 L1534.2,442.6 L1534.8,442.6 L1535.5,442.6 L1536.2,442.6 L1536.8,442.6 L1537.5,442.7 L1538.2,442.7 L1538.8,442.7 L1539.5,442.6 L1540.2,442.6 L1540.8,442.6 L1541.5,442.6 L1542.2,442.6 L1542.8,442.5 L1543.5,442.5 L1544.2,442.5 L1544.8,442.5 L1545.5,442.5 L1546.2,442.6 L1546.8,442.6 L1547.5,442.7 L1548.2,442.7 L1548.8,442.8 L1549.5,442.8 L1550.2,442.8 L1550.8,442.7 L1551.5,442.7 L1552.2,442.6 L1552.8,442.7 L1553.5,442.7 L1554.2,442.8 L1554.8,442.8 L1555.5,442.8 L1556.2,442.9 L1556.8,442.9 L1557.5,443.0 L1558.2,443.0 L1558.8,443.0 L1559.5,443.1 L1560.2,443.1 L1560.8,443.2 L1561.5,443.2 L1562.2,443.3 L1562.8,443.3 L1563.5,443.3 L1564.2,443.3 L1564.8,443.3 L1565.5,443.3 L1566.2,443.3 L1566.8,443.3 L1567.5,443.3 L1568.2,443.3 L1568.8,443.3 L1569.5,443.3 L1570.2,443.3 L1570.8,443.3 L1571.5,443.3 L1572.2,443.3 L1572.8,443.3 L1573.5,443.2 L1574.2,443.2 L1574.8,443.2 L1575.5,443.2 L1576.2,443.1 L1576.8,443.0 L1577.5,443.0 L1578.2,442.9 L1578.8,442.8 L1579.5,442.8 L1580.2,442.8 L1580.8,442.8 L1581.5,442.8 L1582.2,442.8 L1582.8,442.9 L1583.5,442.9 L1584.2,443.0 L1584.8,443.1 L1585.5,443.1 L1586.2,443.2 L1586.8,443.3 L1587.5,443.3 L1588.2,443.4 L1588.8,443.4 L1589.5,443.5 L1590.2,443.5 L1590.8,443.5 L1591.5,443.5 L1592.2,443.6 L1592.8,443.6 L1593.5,443.6 L1594.2,443.6 L1594.8,443.6 L1595.5,443.6 L1596.2,443.6 L1596.8,443.6 L1597.5,443.5 L1598.2,443.5 L1598.8,443.5 L1599.5,443.5 L1600.2,443.5 L1600.8,443.4 L1601.5,443.4 L1602.2,443.4 L1602.8,443.4 L1603.5,443.4 L1604.2,443.4 L1604.8,443.4 L1605.5,443.4 L1606.2,443.4 L1606.8,443.4 L1607.5,443.4 L1608.2,443.4 L1608.8,443.4 L1609.5,443.5 L1610.2,443.5 L1610.8,443.5 L1611.5,443.5 L1612.2,443.5 L1612.8,443.5 L1613.5,443.5 L1614.2,443.6 L1614.8,443.6 L1615.5,443.6 L1616.2,443.6 L1616.8,443.6 L1617.5,443.6 L1618.2,443.6 L1618.8,443.6 L1619.5,443.6 L1620.2,443.6 L1620.8,443.6 L1621.5,443.5 L1622.2,443.5 L1622.8,443.5 L1623.5,443.5 L1624.2,443.5 L1624.8,443.5 L1625.5,443.5 L1626.2,443.5 L1626.8,443.5 L1627.5,443.5 L1628.2,443.4 L1628.8,443.4 L1629.5,443.4 L1630.2,443.3 L1630.8,443.3 L1631.5,443.4 L1632.2,443.4 L1632.8,443.5 L1633.5,443.5 L1634.2,443.6 L1634.8,443.6 L1635.5,443.6 L1636.2,443.6 L1636.8,443.7 L1637.5,445.6 L1638.2,448.1 L1638.8,445.6 L1639.5,445.7 L1640.2,445.7 L1640.8,445.7 L1641.5,445.6 L1642.2,445.5 L1642.8,445.5 L1643.5,445.6 L1644.2,445.8 L1644.8,446.1 L1645.5,446.1 L1646.2,446.1 L1646.8,446.2 L1647.5,446.7 L1648.2,447.1 L1648.8,447.4 L1649.5,447.6 L1650.2,447.9 L1650.8,448.0 L1651.5,448.2 L1652.2,448.4 L1652.8,448.6 L1653.5,448.6 L1654.2,448.6 L1654.8,448.6 L1655.5,448.6 L1656.2,448.6 L1656.8,448.6 L1657.5,448.5 L1658.2,448.4 L1658.8,448.5 L1659.5,448.8 L1660.2,448.9 L1660.8,448.9 L1661.5,448.9 L1662.2,449.0 L1662.8,449.1 L1663.5,449.2 L1664.2,449.3 L1664.8,449.5 L1665.5,449.6 L1666.2,449.7 L1666.8,449.8 L1667.5,450.0 L1668.2,450.1 L1668.8,450.2 L1669.5,450.3 L1670.2,450.4 L1670.8,450.6 L1671.5,450.7 L1672.2,450.8 L1672.8,450.9 L1673.5,451.0 L1674.2,451.2 L1674.8,451.3 L1675.5,451.4 L1676.2,451.5 L1676.8,451.7 L1677.5,451.8 L1678.2,451.9 L1678.8,452.0 L1679.5,452.1 L1680.2,452.3 L1680.8,452.4 L1681.5,452.5 L1682.2,452.5 L1682.8,452.5 L1683.5,452.5 L1684.2,452.5 L1684.8,452.5 L1685.5,452.5 L1686.2,452.5 L1686.8,452.5 L1687.5,452.5 L1688.2,452.5 L1688.8,452.5 L1689.5,453.3 L1690.2,453.3 L1690.8,453.3 L1691.5,453.3 L1692.2,453.3 L1692.8,453.3 L1693.5,453.3 L1694.2,453.3 L1694.8,453.3 L1695.5,453.3 L1696.2,453.3 L1696.8,453.3 L1697.5,453.3 L1698.2,453.3 L1698.8,453.3 L1699.5,453.3 L1700.2,453.3 L1700.8,453.3 L1701.5,453.3 L1702.2,453.3 L1702.8,453.3 L1703.5,453.3 L1704.2,453.3 L1704.8,453.3 L1705.5,453.3 L1706.2,453.3 L1706.8,453.3 L1707.5,453.3 L1708.2,453.3 L1708.8,453.3 L1709.5,453.3 L1710.2,453.3 L1710.8,453.3 L1711.5,453.3 L1712.2,453.3 L1712.8,453.3 L1713.5,453.3 L1714.2,453.3 L1714.8,453.3 L1715.5,453.3 L1716.2,453.3 L1716.8,453.3 L1717.5,453.3 L1718.2,453.3 L1718.8,453.3 L1719.5,453.3 L1720.2,453.3 L1720.8,453.3 L1721.5,453.3 L1722.2,453.3 L1722.8,453.3 L1723.5,453.3 L1724.2,453.3 L1724.8,453.3 L1725.5,453.3 L1726.2,453.3 L1726.8,453.3 L1727.5,453.3 L1728.2,453.3 L1728.8,453.3 L1729.5,453.3 L1730.2,453.3 L1730.8,453.3 L1731.5,453.3 L1732.2,453.3 L1732.8,453.3 L1733.5,453.3 L1734.2,453.3 L1734.8,453.3 L1735.5,453.3 L1736.2,453.3 L1736.8,453.3 L1737.5,453.3 L1738.2,453.3 L1738.8,453.3 L1739.5,453.3 L1740.2,453.3 L1740.8,453.3 L1741.5,453.3 L1742.2,453.3 L1742.8,453.3 L1743.5,453.3 L1744.2,453.3 L1744.8,453.3 L1745.5,453.3 L1746.2,453.3 L1746.8,453.3 L1747.5,453.3 L1748.2,453.3 L1748.8,453.3 L1749.5,453.3 L1750.2,453.3 L1750.8,453.3 L1751.5,453.3 L1752.2,453.3 L1752.8,453.3 L1753.5,453.3 L1754.2,453.3 L1754.8,453.3 L1755.5,453.3 L1756.2,453.3 L1756.8,453.3 L1757.5,453.3 L1758.2,453.3 L1758.8,453.3 L1759.5,453.3 L1760.2,453.3 L1760.8,453.3 L1761.5,453.3 L1762.2,453.3 L1762.8,453.3 L1763.5,453.3 L1764.2,453.3 L1764.8,453.3 L1765.5,453.3 L1766.2,453.3 L1766.8,453.3 L1767.5,453.3 L1768.2,453.3 L1768.8,453.3 L1769.5,453.3 L1770.2,453.3 L1770.8,453.3 L1771.5,453.3 L1772.2,453.3 L1772.8,453.3 L1773.5,453.3 L1774.2,453.3 L1774.8,453.3 L1775.5,453.3 L1776.2,453.3 L1776.8,453.3 L1777.5,453.3 L1778.2,453.3 L1778.8,453.3 L1779.5,453.3 L1780.2,453.3 L1780.8,453.3 L1781.5,453.3 L1782.2,453.3 L1782.8,453.3 L1783.5,453.3 L1784.2,453.3 L1784.8,453.3 L1785.5,453.3 L1786.2,453.3 L1786.8,453.3 L1787.5,453.3 L1788.2,453.3 L1788.8,453.3 L1789.5,453.3 L1790.2,453.3 L1790.8,453.3 L1791.5,453.3 L1792.2,453.3 L1792.8,453.3 L1793.5,453.3 L1794.2,453.3 L1794.8,453.3 L1795.5,453.3 L1796.2,453.3 L1796.8,453.3 L1797.5,453.3 L1798.2,453.3 L1798.8,453.3 L1799.5,453.3 L1800.2,453.3 L1800.8,453.3 L1801.5,453.3 L1802.2,453.3 L1802.8,453.3 L1803.5,453.3 L1804.2,453.3 L1804.8,453.3 L1805.5,453.3 L1806.2,453.3 L1806.8,453.3 L1807.5,453.3 L1808.2,453.3 L1808.8,453.3 L1809.5,453.3 L1810.2,453.3 L1810.8,453.3 L1811.5,453.3 L1812.2,453.3 L1812.8,453.3 L1813.5,453.3 L1814.2,453.3 L1814.8,453.3 L1815.5,453.3 L1816.2,453.3 L1816.8,453.3 L1817.5,453.3 L1818.2,453.3 L1818.8,453.3 L1819.5,453.3 L1820.2,453.3 L1820.8,453.3 L1821.5,453.3 L1822.2,453.3 L1822.8,453.3 L1823.5,453.3 L1824.2,453.3 L1824.8,453.3 L1825.5,453.3 L1826.2,453.3 L1826.8,453.3 L1827.5,453.3 L1828.2,453.3 L1828.8,453.3 L1829.5,453.3 L1830.2,453.3 L1830.8,453.3 L1831.5,453.3 L1832.2,453.3 L1832.8,453.3 L1833.5,453.3 L1834.2,453.3 L1834.8,453.3 L1835.5,453.3 L1836.2,453.3 L1836.8,453.3 L1837.5,453.3 L1838.2,453.3 L1838.8,453.3 L1839.5,453.3 L1840.2,453.3 L1840.8,453.3 L1841.5,453.3 L1842.2,453.3 L1842.8,453.3 L1843.5,453.3 L1844.2,453.3 L1844.8,453.3 L1845.5,453.3 L1846.2,453.3 L1846.8,453.3 L1847.5,453.3 L1848.2,453.3 L1848.8,453.3 L1849.5,453.3 L1850.2,453.3 L1850.8,453.3 L1851.5,453.3 L1852.2,453.3 L1852.8,453.3 L1853.5,453.3 L1854.2,453.3 L1854.8,453.3 L1855.5,453.3 L1856.2,453.3" fill="none" stroke="#4f8fc8" stroke-opacity="0.85" stroke-width="1.15" stroke-linejoin="round"/><rect x="1150.2" y="488.6" width="11.6" height="3.4" rx="1" fill="#5a9bd3"/><text x="1165.8" y="494.2" font-size="10.70" fill="#d0d1d3" text-anchor="start" letter-spacing="0.18" stroke="#d0d1d3" stroke-width="0.3" >Batterie.Ladestrom</text><rect x="1270" y="488.6" width="11.6" height="3.4" rx="1" fill="#f2b48c"/><text x="1285.8" y="494.2" font-size="10.70" fill="#d0d1d3" text-anchor="start" letter-spacing="0.18" stroke="#d0d1d3" stroke-width="0.3" >Batterie.Entladestrom</text></svg>
<div class="p" style="left:26px;top:517px;width:1879px;height:309px;"></div>
<span class="t" style="left:831.0px;top:525.3px;font-size:12.00px;color:#dcdde0;font-weight:bold;letter-spacing:0.09px;">aktuelle Leistung und Temperatur des Reglers</span>
<svg width="1924" height="1079" viewBox="0 0 1924 1079"><path d="M1103,529.6 h8.4 l-4.2,4.4 Z" fill="#9fa0a2"/><path d="M81.5,799.5 H1750" stroke="rgba(200,200,200,0.2)" stroke-width="1"/><text x="75.5" y="802.3" font-size="10.70" fill="#d0d1d3" text-anchor="end" letter-spacing="0.00" stroke="#d0d1d3" stroke-width="0.3" >0</text><path d="M81.5,750.5 H1750" stroke="rgba(200,200,200,0.2)" stroke-width="1"/><text x="75.5" y="753.4" font-size="10.70" fill="#d0d1d3" text-anchor="end" letter-spacing="0.00" stroke="#d0d1d3" stroke-width="0.3" >25</text><path d="M81.5,701.5 H1750" stroke="rgba(200,200,200,0.2)" stroke-width="1"/><text x="75.5" y="704.4" font-size="10.70" fill="#d0d1d3" text-anchor="end" letter-spacing="0.00" stroke="#d0d1d3" stroke-width="0.3" >50</text><path d="M81.5,652.5 H1750" stroke="rgba(200,200,200,0.2)" stroke-width="1"/><text x="75.5" y="655.4" font-size="10.70" fill="#d0d1d3" text-anchor="end" letter-spacing="0.00" stroke="#d0d1d3" stroke-width="0.3" >75</text><path d="M81.5,603.5 H1750" stroke="rgba(200,200,200,0.2)" stroke-width="1"/><text x="75.5" y="606.4" font-size="10.70" fill="#d0d1d3" text-anchor="end" letter-spacing="0.00" stroke="#d0d1d3" stroke-width="0.3" >100</text><path d="M81.5,554.5 H1750" stroke="rgba(200,200,200,0.2)" stroke-width="1"/><text x="75.5" y="557.5" font-size="10.70" fill="#d0d1d3" text-anchor="end" letter-spacing="0.00" stroke="#d0d1d3" stroke-width="0.3" >125</text><path d="M81.5,553.5 V799" stroke="rgba(200,200,200,0.2)" stroke-width="1"/><text x="81.5" y="816.1" font-size="10.70" fill="#d0d1d3" text-anchor="middle" letter-spacing="0.00" stroke="#d0d1d3" stroke-width="0.3" >05:00</text><path d="M174.5,553.5 V799" stroke="rgba(200,200,200,0.2)" stroke-width="1"/><text x="174.2" y="816.1" font-size="10.70" fill="#d0d1d3" text-anchor="middle" letter-spacing="0.00" stroke="#d0d1d3" stroke-width="0.3" >06:00</text><path d="M266.5,553.5 V799" stroke="rgba(200,200,200,0.2)" stroke-width="1"/><text x="266.9" y="816.1" font-size="10.70" fill="#d0d1d3" text-anchor="middle" letter-spacing="0.00" stroke="#d0d1d3" stroke-width="0.3" >07:00</text><path d="M359.5,553.5 V799" stroke="rgba(200,200,200,0.2)" stroke-width="1"/><text x="359.6" y="816.1" font-size="10.70" fill="#d0d1d3" text-anchor="middle" letter-spacing="0.00" stroke="#d0d1d3" stroke-width="0.3" >08:00</text><path d="M452.5,553.5 V799" stroke="rgba(200,200,200,0.2)" stroke-width="1"/><text x="452.3" y="816.1" font-size="10.70" fill="#d0d1d3" text-anchor="middle" letter-spacing="0.00" stroke="#d0d1d3" stroke-width="0.3" >09:00</text><path d="M545.5,553.5 V799" stroke="rgba(200,200,200,0.2)" stroke-width="1"/><text x="545.0" y="816.1" font-size="10.70" fill="#d0d1d3" text-anchor="middle" letter-spacing="0.00" stroke="#d0d1d3" stroke-width="0.3" >10:00</text><path d="M637.5,553.5 V799" stroke="rgba(200,200,200,0.2)" stroke-width="1"/><text x="637.8" y="816.1" font-size="10.70" fill="#d0d1d3" text-anchor="middle" letter-spacing="0.00" stroke="#d0d1d3" stroke-width="0.3" >11:00</text><path d="M730.5,553.5 V799" stroke="rgba(200,200,200,0.2)" stroke-width="1"/><text x="730.5" y="816.1" font-size="10.70" fill="#d0d1d3" text-anchor="middle" letter-spacing="0.00" stroke="#d0d1d3" stroke-width="0.3" >12:00</text><path d="M823.5,553.5 V799" stroke="rgba(200,200,200,0.2)" stroke-width="1"/><text x="823.2" y="816.1" font-size="10.70" fill="#d0d1d3" text-anchor="middle" letter-spacing="0.00" stroke="#d0d1d3" stroke-width="0.3" >13:00</text><path d="M915.5,553.5 V799" stroke="rgba(200,200,200,0.2)" stroke-width="1"/><text x="915.9" y="816.1" font-size="10.70" fill="#d0d1d3" text-anchor="middle" letter-spacing="0.00" stroke="#d0d1d3" stroke-width="0.3" >14:00</text><path d="M1008.5,553.5 V799" stroke="rgba(200,200,200,0.2)" stroke-width="1"/><text x="1008.6" y="816.1" font-size="10.70" fill="#d0d1d3" text-anchor="middle" letter-spacing="0.00" stroke="#d0d1d3" stroke-width="0.3" >15:00</text><path d="M1101.5,553.5 V799" stroke="rgba(200,200,200,0.2)" stroke-width="1"/><text x="1101.3" y="816.1" font-size="10.70" fill="#d0d1d3" text-anchor="middle" letter-spacing="0.00" stroke="#d0d1d3" stroke-width="0.3" >16:00</text><path d="M1194.5,553.5 V799" stroke="rgba(200,200,200,0.2)" stroke-width="1"/><text x="1194.0" y="816.1" font-size="10.70" fill="#d0d1d3" text-anchor="middle" letter-spacing="0.00" stroke="#d0d1d3" stroke-width="0.3" >17:00</text><path d="M1286.5,553.5 V799" stroke="rgba(200,200,200,0.2)" stroke-width="1"/><text x="1286.7" y="816.1" font-size="10.70" fill="#d0d1d3" text-anchor="middle" letter-spacing="0.00" stroke="#d0d1d3" stroke-width="0.3" >18:00</text><path d="M1379.5,553.5 V799" stroke="rgba(200,200,200,0.2)" stroke-width="1"/><text x="1379.4" y="816.1" font-size="10.70" fill="#d0d1d3" text-anchor="middle" letter-spacing="0.00" stroke="#d0d1d3" stroke-width="0.3" >19:00</text><path d="M1472.5,553.5 V799" stroke="rgba(200,200,200,0.2)" stroke-width="1"/><text x="1472.1" y="816.1" font-size="10.70" fill="#d0d1d3" text-anchor="middle" letter-spacing="0.00" stroke="#d0d1d3" stroke-width="0.3" >20:00</text><path d="M1564.5,553.5 V799" stroke="rgba(200,200,200,0.2)" stroke-width="1"/><text x="1564.9" y="816.1" font-size="10.70" fill="#d0d1d3" text-anchor="middle" letter-spacing="0.00" stroke="#d0d1d3" stroke-width="0.3" >21:00</text><path d="M1657.5,553.5 V799" stroke="rgba(200,200,200,0.2)" stroke-width="1"/><text x="1657.6" y="816.1" font-size="10.70" fill="#d0d1d3" text-anchor="middle" letter-spacing="0.00" stroke="#d0d1d3" stroke-width="0.3" >22:00</text><text x="1760.3" y="801.5" font-size="10.70" fill="#d0d1d3" text-anchor="start" letter-spacing="0.00" stroke="#d0d1d3" stroke-width="0.3" >0 °C</text><path d="M1750,737.5 h5" stroke="rgba(200,200,200,0.2)" stroke-width="1"/><text x="1760.3" y="740.3" font-size="10.70" fill="#d0d1d3" text-anchor="start" letter-spacing="0.00" stroke="#d0d1d3" stroke-width="0.3" >20 °C</text><path d="M1750,676.5 h5" stroke="rgba(200,200,200,0.2)" stroke-width="1"/><text x="1760.3" y="679.1" font-size="10.70" fill="#d0d1d3" text-anchor="start" letter-spacing="0.00" stroke="#d0d1d3" stroke-width="0.3" >40 °C</text><path d="M1750,615.5 h5" stroke="rgba(200,200,200,0.2)" stroke-width="1"/><text x="1760.3" y="617.9" font-size="10.70" fill="#d0d1d3" text-anchor="start" letter-spacing="0.00" stroke="#d0d1d3" stroke-width="0.3" >60 °C</text><text x="1760.3" y="556.7" font-size="10.70" fill="#d0d1d3" text-anchor="start" letter-spacing="0.00" stroke="#d0d1d3" stroke-width="0.3" >80 °C</text><text transform="translate(42.2,683.5) rotate(-90)" font-size="11.4" stroke="#d0d1d3" stroke-width="0.3" fill="#d0d1d3" text-anchor="middle">Watt</text><text transform="translate(1799.6,683.5) rotate(90)" font-size="11.4" stroke="#d0d1d3" stroke-width="0.3" fill="#d0d1d3" text-anchor="middle">Grad</text><path d="M81.5,799.0 L360.0,799.0 L383.8,798.5 L387.5,796.7 L397.5,793.0 L410.0,788.7 L422.5,783.5 L430.1,781.2 L435.1,780.5 L436.3,782.5 L438.8,780.0 L445.1,780.0 L450.1,780.0 L451.8,787.5 L453.8,780.5 L457.6,778.0 L462.6,768.0 L466.3,763.0 L471.3,754.2 L475.1,750.0 L478.8,746.0 L482.6,742.5 L486.3,737.2 L488.8,740.5 L491.3,745.5 L494.4,749.2 L495.9,730.4 L496.6,712.9 L497.6,737.9 L498.6,715.4 L499.6,695.4 L503.9,689.2 L507.6,684.2 L512.6,677.9 L513.6,692.9 L515.1,674.2 L520.1,665.4 L525.1,656.6 L528.1,652.1 L529.6,704.2 L530.9,647.9 L535.1,640.4 L540.1,631.6 L543.4,626.6 L544.6,669.1 L545.6,621.6 L550.1,614.1 L555.1,606.6 L560.2,601.6 L565.2,594.8 L567.7,592.8 L570.2,593.3 L573.9,587.3 L575.7,605.3 L577.2,580.3 L580.2,577.8 L582.7,579.1 L585.2,577.8 L587.7,582.8 L588.9,578.3 L590.7,591.6 L592.7,574.1 L594.7,571.6 L597.7,572.8 L599.7,576.6 L602.2,595.3 L603.9,622.9 L606.4,655.4 L609.4,690.4 L610.9,645.4 L612.7,598.3 L614.4,636.6 L615.7,625.4 L618.9,684.2 L621.9,615.4 L623.4,660.4 L625.2,691.7 L627.5,670.4 L629.5,647.4 L631.3,675.4 L632.5,650.4 L634.3,661.6 L637.0,604.1 L638.8,660.4 L641.3,662.9 L643.8,687.9 L645.5,692.2 L647.5,682.9 L649.5,652.9 L651.3,605.3 L652.5,607.9 L654.3,575.8 L655.8,582.8 L657.0,604.1 L658.8,582.3 L660.8,594.1 L663.0,600.3 L665.0,659.9 L667.0,627.9 L668.0,599.1 L669.5,622.9 L671.8,615.4 L674.5,621.6 L677.0,626.6 L679.0,640.4 L680.5,629.1 L685.0,635.4 L690.1,642.9 L695.1,648.4 L702.6,656.6 L706.3,659.9 L710.1,662.9 L713.8,666.2 L717.6,669.1 L721.3,671.9 L725.1,674.2 L728.8,677.1 L732.6,679.2 L736.3,681.5 L740.1,683.4 L745.1,686.7 L747.1,686.7 L747.6,705.4 L748.8,731.7 L750.1,705.9 L755.1,709.2 L758.9,711.4 L762.6,712.9 L766.4,713.8 L770.1,715.4 L773.9,716.7 L777.6,717.9 L781.4,715.4 L782.6,719.2 L783.9,715.4 L786.4,720.9 L788.1,719.2 L791.4,726.7 L793.9,724.2 L797.0,725.5 L800.1,725.9 L803.5,726.9 L806.8,728.0 L810.1,728.4 L813.5,728.8 L816.8,729.7 L820.2,730.4 L823.5,730.2 L826.8,730.5 L830.2,730.4 L833.5,730.7 L836.8,730.3 L840.2,730.9 L843.5,731.4 L846.8,732.1 L850.2,732.9 L853.5,734.0 L856.8,734.5 L860.2,734.9 L863.5,735.2 L866.9,736.4 L870.2,736.7 L873.5,736.8 L876.9,737.6 L880.2,737.9 L883.5,738.2 L886.9,738.7 L890.2,739.7 L894.0,739.8 L897.7,739.2 L900.0,739.7 L903.3,739.7 L906.7,739.9 L910.0,740.5 L913.3,740.9 L916.7,740.8 L920.0,740.5 L925.0,741.2 L928.4,740.3 L931.7,740.3 L935.0,739.2 L938.8,740.5 L942.5,741.7 L945.7,742.0 L948.8,741.8 L951.9,742.7 L955.0,742.5 L958.0,742.4 L961.0,742.4 L964.0,742.1 L967.1,741.3 L970.1,741.2 L973.4,741.8 L976.7,742.4 L980.1,743.5 L983.2,742.5 L986.3,742.2 L989.8,742.3 L993.2,743.0 L996.6,743.8 L1000.1,744.2 L1003.4,744.3 L1006.7,745.5 L1010.1,746.0 L1013.1,745.9 L1016.1,745.9 L1019.1,746.4 L1022.1,746.1 L1025.1,746.2 L1028.1,745.9 L1031.1,745.9 L1034.1,745.9 L1037.1,745.2 L1040.1,745.5 L1043.4,745.0 L1046.8,743.4 L1050.1,743.0 L1053.9,743.4 L1057.6,743.5 L1060.7,744.6 L1063.9,744.6 L1067.0,746.2 L1070.1,746.7 L1073.1,746.8 L1076.1,747.3 L1079.1,747.0 L1082.1,747.3 L1085.1,748.0 L1088.1,747.4 L1091.1,747.9 L1094.1,746.9 L1097.1,747.2 L1100.2,746.7 L1103.2,747.1 L1106.2,747.1 L1109.2,746.6 L1112.2,746.6 L1115.2,746.7 L1118.2,746.9 L1121.2,747.3 L1124.2,746.8 L1127.2,747.5 L1130.2,747.5 L1133.2,747.7 L1136.2,747.8 L1139.2,747.0 L1142.2,747.9 L1145.2,747.5 L1148.2,747.0 L1151.2,747.1 L1154.2,747.3 L1157.2,747.4 L1160.2,747.0 L1164.6,746.3 L1169.0,746.0 L1172.1,747.1 L1175.2,747.5 L1179.0,747.7 L1182.7,748.0 L1184.5,760.5 L1186.0,775.0 L1187.2,759.2 L1191.5,760.0 L1194.6,758.4 L1197.7,757.2 L1201.5,762.5 L1205.0,761.7 L1205.2,761.7 L1210.0,769.2 L1210.2,769.2 L1215.0,773.5 L1215.2,773.0 L1220.0,776.2 L1223.4,776.1 L1226.7,775.9 L1230.0,776.2 L1233.0,774.7 L1235.5,778.0 L1238.7,777.6 L1241.9,777.7 L1245.0,778.0 L1248.4,779.1 L1251.7,780.4 L1255.1,781.0 L1258.4,781.2 L1261.7,781.6 L1265.1,782.5 L1268.4,783.5 L1271.7,783.7 L1275.1,784.2 L1278.8,785.0 L1282.6,786.0 L1286.3,787.1 L1290.1,788.7 L1293.4,790.1 L1296.8,791.5 L1300.1,792.5 L1303.4,793.2 L1306.8,793.9 L1310.1,794.7 L1313.4,794.8 L1316.8,796.1 L1320.1,796.2 L1323.1,795.9 L1326.1,796.3 L1329.1,796.7 L1332.1,796.1 L1335.1,796.5 L1338.2,796.7 L1341.4,796.9 L1344.5,796.6 L1347.6,796.8 L1350.8,796.1 L1353.9,796.5 L1355.9,798.7 L1358.9,798.7 L1361.9,798.4 L1364.9,799.0 L1368.0,799.0 L1371.0,799.0 L1374.0,799.0 L1377.0,799.0 L1380.1,799.0 L1383.1,799.0 L1386.1,799.0 L1389.1,799.0 L1392.2,799.0 L1395.2,799.0 L1398.2,799.0 L1401.2,799.0 L1404.2,799.0 L1407.3,799.0 L1410.3,799.0 L1413.3,799.0 L1416.3,799.0 L1419.4,799.0 L1422.4,799.0 L1425.4,799.0 L1428.4,799.0 L1431.4,799.0 L1434.5,799.0 L1437.5,799.0 L1440.5,799.0 L1443.5,799.0 L1446.6,799.0 L1449.6,799.0 L1452.6,799.0 L1455.6,799.0 L1458.6,799.0 L1461.7,799.0 L1464.7,799.0 L1467.7,799.0 L1470.7,799.0 L1473.8,799.0 L1476.8,799.0 L1479.8,799.0 L1482.8,799.0 L1485.8,799.0 L1488.9,799.0 L1491.9,799.0 L1494.9,799.0 L1497.9,799.0 L1501.0,799.0 L1504.0,799.0 L1507.0,799.0 L1510.0,799.0 L1513.1,799.0 L1516.1,799.0 L1519.1,799.0 L1522.1,799.0 L1525.1,799.0 L1528.2,799.0 L1531.2,799.0 L1534.2,799.0 L1537.2,799.0 L1540.3,799.0 L1543.3,799.0 L1546.3,799.0 L1549.3,799.0 L1552.3,799.0 L1555.4,799.0 L1558.4,799.0 L1561.4,799.0 L1564.4,799.0 L1567.5,799.0 L1570.5,799.0 L1573.5,799.0 L1576.5,799.0 L1579.5,799.0 L1582.6,799.0 L1585.6,799.0 L1588.6,799.0 L1591.6,799.0 L1594.7,799.0 L1597.7,799.0 L1600.7,799.0 L1603.7,799.0 L1606.7,799.0 L1609.8,799.0 L1612.8,799.0 L1615.8,799.0 L1618.8,799.0 L1621.9,799.0 L1624.9,799.0 L1627.9,799.0 L1630.9,799.0 L1634.0,799.0 L1637.0,799.0 L1640.0,799.0 L1643.0,799.0 L1646.0,799.0 L1649.1,799.0 L1652.1,799.0 L1655.1,799.0 L1658.1,799.0 L1661.2,799.0 L1664.2,799.0 L1667.2,799.0 L1670.2,799.0 L1673.2,799.0 L1676.3,799.0 L1679.3,799.0 L1682.3,799.0 L1685.3,799.0 L1688.4,799.0 L1691.4,799.0 L1694.4,799.0 L1694.4,799.1 L81.5,799.1 Z" fill="#7eb26d" fill-opacity="0.13"/><path d="M81.5,799.0 L360.0,799.0 L383.8,798.5 L387.5,796.7 L397.5,793.0 L410.0,788.7 L422.5,783.5 L430.1,781.2 L435.1,780.5 L436.3,782.5 L438.8,780.0 L445.1,780.0 L450.1,780.0 L451.8,787.5 L453.8,780.5 L457.6,778.0 L462.6,768.0 L466.3,763.0 L471.3,754.2 L475.1,750.0 L478.8,746.0 L482.6,742.5 L486.3,737.2 L488.8,740.5 L491.3,745.5 L494.4,749.2 L495.9,730.4 L496.6,712.9 L497.6,737.9 L498.6,715.4 L499.6,695.4 L503.9,689.2 L507.6,684.2 L512.6,677.9 L513.6,692.9 L515.1,674.2 L520.1,665.4 L525.1,656.6 L528.1,652.1 L529.6,704.2 L530.9,647.9 L535.1,640.4 L540.1,631.6 L543.4,626.6 L544.6,669.1 L545.6,621.6 L550.1,614.1 L555.1,606.6 L560.2,601.6 L565.2,594.8 L567.7,592.8 L570.2,593.3 L573.9,587.3 L575.7,605.3 L577.2,580.3 L580.2,577.8 L582.7,579.1 L585.2,577.8 L587.7,582.8 L588.9,578.3 L590.7,591.6 L592.7,574.1 L594.7,571.6 L597.7,572.8 L599.7,576.6 L602.2,595.3 L603.9,622.9 L606.4,655.4 L609.4,690.4 L610.9,645.4 L612.7,598.3 L614.4,636.6 L615.7,625.4 L618.9,684.2 L621.9,615.4 L623.4,660.4 L625.2,691.7 L627.5,670.4 L629.5,647.4 L631.3,675.4 L632.5,650.4 L634.3,661.6 L637.0,604.1 L638.8,660.4 L641.3,662.9 L643.8,687.9 L645.5,692.2 L647.5,682.9 L649.5,652.9 L651.3,605.3 L652.5,607.9 L654.3,575.8 L655.8,582.8 L657.0,604.1 L658.8,582.3 L660.8,594.1 L663.0,600.3 L665.0,659.9 L667.0,627.9 L668.0,599.1 L669.5,622.9 L671.8,615.4 L674.5,621.6 L677.0,626.6 L679.0,640.4 L680.5,629.1 L685.0,635.4 L690.1,642.9 L695.1,648.4 L702.6,656.6 L706.3,659.9 L710.1,662.9 L713.8,666.2 L717.6,669.1 L721.3,671.9 L725.1,674.2 L728.8,677.1 L732.6,679.2 L736.3,681.5 L740.1,683.4 L745.1,686.7 L747.1,686.7 L747.6,705.4 L748.8,731.7 L750.1,705.9 L755.1,709.2 L758.9,711.4 L762.6,712.9 L766.4,713.8 L770.1,715.4 L773.9,716.7 L777.6,717.9 L781.4,715.4 L782.6,719.2 L783.9,715.4 L786.4,720.9 L788.1,719.2 L791.4,726.7 L793.9,724.2 L797.0,725.5 L800.1,725.9 L803.5,726.9 L806.8,728.0 L810.1,728.4 L813.5,728.8 L816.8,729.7 L820.2,730.4 L823.5,730.2 L826.8,730.5 L830.2,730.4 L833.5,730.7 L836.8,730.3 L840.2,730.9 L843.5,731.4 L846.8,732.1 L850.2,732.9 L853.5,734.0 L856.8,734.5 L860.2,734.9 L863.5,735.2 L866.9,736.4 L870.2,736.7 L873.5,736.8 L876.9,737.6 L880.2,737.9 L883.5,738.2 L886.9,738.7 L890.2,739.7 L894.0,739.8 L897.7,739.2 L900.0,739.7 L903.3,739.7 L906.7,739.9 L910.0,740.5 L913.3,740.9 L916.7,740.8 L920.0,740.5 L925.0,741.2 L928.4,740.3 L931.7,740.3 L935.0,739.2 L938.8,740.5 L942.5,741.7 L945.7,742.0 L948.8,741.8 L951.9,742.7 L955.0,742.5 L958.0,742.4 L961.0,742.4 L964.0,742.1 L967.1,741.3 L970.1,741.2 L973.4,741.8 L976.7,742.4 L980.1,743.5 L983.2,742.5 L986.3,742.2 L989.8,742.3 L993.2,743.0 L996.6,743.8 L1000.1,744.2 L1003.4,744.3 L1006.7,745.5 L1010.1,746.0 L1013.1,745.9 L1016.1,745.9 L1019.1,746.4 L1022.1,746.1 L1025.1,746.2 L1028.1,745.9 L1031.1,745.9 L1034.1,745.9 L1037.1,745.2 L1040.1,745.5 L1043.4,745.0 L1046.8,743.4 L1050.1,743.0 L1053.9,743.4 L1057.6,743.5 L1060.7,744.6 L1063.9,744.6 L1067.0,746.2 L1070.1,746.7 L1073.1,746.8 L1076.1,747.3 L1079.1,747.0 L1082.1,747.3 L1085.1,748.0 L1088.1,747.4 L1091.1,747.9 L1094.1,746.9 L1097.1,747.2 L1100.2,746.7 L1103.2,747.1 L1106.2,747.1 L1109.2,746.6 L1112.2,746.6 L1115.2,746.7 L1118.2,746.9 L1121.2,747.3 L1124.2,746.8 L1127.2,747.5 L1130.2,747.5 L1133.2,747.7 L1136.2,747.8 L1139.2,747.0 L1142.2,747.9 L1145.2,747.5 L1148.2,747.0 L1151.2,747.1 L1154.2,747.3 L1157.2,747.4 L1160.2,747.0 L1164.6,746.3 L1169.0,746.0 L1172.1,747.1 L1175.2,747.5 L1179.0,747.7 L1182.7,748.0 L1184.5,760.5 L1186.0,775.0 L1187.2,759.2 L1191.5,760.0 L1194.6,758.4 L1197.7,757.2 L1201.5,762.5 L1205.0,761.7 L1205.2,761.7 L1210.0,769.2 L1210.2,769.2 L1215.0,773.5 L1215.2,773.0 L1220.0,776.2 L1223.4,776.1 L1226.7,775.9 L1230.0,776.2 L1233.0,774.7 L1235.5,778.0 L1238.7,777.6 L1241.9,777.7 L1245.0,778.0 L1248.4,779.1 L1251.7,780.4 L1255.1,781.0 L1258.4,781.2 L1261.7,781.6 L1265.1,782.5 L1268.4,783.5 L1271.7,783.7 L1275.1,784.2 L1278.8,785.0 L1282.6,786.0 L1286.3,787.1 L1290.1,788.7 L1293.4,790.1 L1296.8,791.5 L1300.1,792.5 L1303.4,793.2 L1306.8,793.9 L1310.1,794.7 L1313.4,794.8 L1316.8,796.1 L1320.1,796.2 L1323.1,795.9 L1326.1,796.3 L1329.1,796.7 L1332.1,796.1 L1335.1,796.5 L1338.2,796.7 L1341.4,796.9 L1344.5,796.6 L1347.6,796.8 L1350.8,796.1 L1353.9,796.5 L1355.9,798.7 L1358.9,798.7 L1361.9,798.4 L1364.9,799.0 L1368.0,799.0 L1371.0,799.0 L1374.0,799.0 L1377.0,799.0 L1380.1,799.0 L1383.1,799.0 L1386.1,799.0 L1389.1,799.0 L1392.2,799.0 L1395.2,799.0 L1398.2,799.0 L1401.2,799.0 L1404.2,799.0 L1407.3,799.0 L1410.3,799.0 L1413.3,799.0 L1416.3,799.0 L1419.4,799.0 L1422.4,799.0 L1425.4,799.0 L1428.4,799.0 L1431.4,799.0 L1434.5,799.0 L1437.5,799.0 L1440.5,799.0 L1443.5,799.0 L1446.6,799.0 L1449.6,799.0 L1452.6,799.0 L1455.6,799.0 L1458.6,799.0 L1461.7,799.0 L1464.7,799.0 L1467.7,799.0 L1470.7,799.0 L1473.8,799.0 L1476.8,799.0 L1479.8,799.0 L1482.8,799.0 L1485.8,799.0 L1488.9,799.0 L1491.9,799.0 L1494.9,799.0 L1497.9,799.0 L1501.0,799.0 L1504.0,799.0 L1507.0,799.0 L1510.0,799.0 L1513.1,799.0 L1516.1,799.0 L1519.1,799.0 L1522.1,799.0 L1525.1,799.0 L1528.2,799.0 L1531.2,799.0 L1534.2,799.0 L1537.2,799.0 L1540.3,799.0 L1543.3,799.0 L1546.3,799.0 L1549.3,799.0 L1552.3,799.0 L1555.4,799.0 L1558.4,799.0 L1561.4,799.0 L1564.4,799.0 L1567.5,799.0 L1570.5,799.0 L1573.5,799.0 L1576.5,799.0 L1579.5,799.0 L1582.6,799.0 L1585.6,799.0 L1588.6,799.0 L1591.6,799.0 L1594.7,799.0 L1597.7,799.0 L1600.7,799.0 L1603.7,799.0 L1606.7,799.0 L1609.8,799.0 L1612.8,799.0 L1615.8,799.0 L1618.8,799.0 L1621.9,799.0 L1624.9,799.0 L1627.9,799.0 L1630.9,799.0 L1634.0,799.0 L1637.0,799.0 L1640.0,799.0 L1643.0,799.0 L1646.0,799.0 L1649.1,799.0 L1652.1,799.0 L1655.1,799.0 L1658.1,799.0 L1661.2,799.0 L1664.2,799.0 L1667.2,799.0 L1670.2,799.0 L1673.2,799.0 L1676.3,799.0 L1679.3,799.0 L1682.3,799.0 L1685.3,799.0 L1688.4,799.0 L1691.4,799.0 L1694.4,799.0" fill="none" stroke="#85bb74" stroke-width="2" stroke-linejoin="round"/><path d="M81.5,717.3 L85.7,717.3 L89.8,717.3 L94.0,717.2 L98.1,717.7 L102.3,717.2 L106.5,717.5 L110.6,717.8 L114.8,717.4 L118.9,717.7 L123.1,717.8 L127.2,717.5 L131.4,717.7 L135.6,718.0 L139.7,717.8 L143.9,718.0 L148.0,717.7 L152.2,717.8 L156.4,717.8 L160.5,718.1 L164.7,718.4 L168.8,718.2 L173.0,718.2 L177.0,718.4 L181.1,718.2 L185.1,718.4 L189.2,718.0 L193.2,718.2 L197.3,718.4 L201.3,718.5 L205.3,718.3 L209.4,718.1 L213.4,718.2 L217.5,718.2 L221.5,718.3 L225.6,718.6 L229.6,718.3 L233.7,718.7 L237.7,718.7 L241.7,718.2 L245.8,718.4 L249.8,718.5 L253.9,718.3 L257.9,718.5 L262.0,718.8 L266.0,718.6 L270.1,718.4 L274.2,718.7 L278.3,718.5 L282.4,718.8 L286.6,719.0 L290.7,718.7 L294.8,718.6 L298.9,718.7 L303.0,719.0 L307.1,718.7 L311.2,718.8 L315.3,719.1 L319.4,719.4 L323.6,719.1 L327.7,719.1 L331.8,719.3 L335.9,719.0 L340.0,719.3 L344.8,719.4 L349.5,719.2 L354.2,719.5 L359.0,719.5 L363.5,719.5 L368.0,719.0 L372.0,717.7 L376.0,717.0 L380.0,716.0 L384.0,715.6 L388.0,714.9 L392.0,714.5 L396.0,714.5 L400.0,713.8 L404.2,713.8 L408.5,713.0 L412.8,713.1 L417.0,713.0 L421.2,712.3 L425.5,712.3 L429.8,711.7 L434.0,711.6 L438.2,711.5 L442.5,711.2 L446.8,711.0 L451.0,710.6 L455.1,710.1 L459.2,710.0 L463.2,710.0 L467.3,709.6 L471.4,709.2 L475.5,708.9 L479.6,709.0 L483.7,708.4 L487.8,707.8 L491.8,708.0 L495.9,707.5 L500.0,707.3 L504.0,706.7 L508.0,706.0 L512.0,705.6 L516.0,705.0 L520.0,704.5 L524.0,703.7 L528.0,703.4 L532.0,702.5 L536.0,702.3 L540.0,701.3 L544.0,701.0 L548.0,700.9 L552.0,700.7 L556.0,700.2 L560.0,700.1 L564.0,699.5 L568.0,699.5 L572.0,699.1 L576.0,698.7 L580.0,698.6 L584.3,698.7 L588.6,698.3 L592.9,698.1 L597.1,698.2 L601.4,697.8 L605.7,697.8 L610.0,697.6 L614.5,697.5 L619.0,697.9 L623.5,697.7 L628.0,697.6 L632.5,698.2 L637.0,698.0 L642.0,698.2 L647.0,698.8 L651.6,698.6 L656.2,698.1 L660.8,697.4 L665.4,696.5 L670.0,696.3 L674.0,695.9 L678.0,695.8 L682.0,695.7 L686.0,695.7 L690.0,695.7 L694.0,695.2 L698.0,694.9 L702.0,695.0 L706.0,694.6 L710.0,694.4 L714.0,694.5 L718.0,694.4 L722.0,693.9 L726.0,693.9 L730.0,693.8 L734.2,693.7 L738.5,693.6 L742.8,693.1 L747.0,693.0 L750.0,695.0 L754.2,695.3 L758.3,694.9 L762.5,695.3 L766.7,695.4 L770.8,695.5 L775.0,695.3 L779.2,695.1 L783.3,695.1 L787.5,695.5 L791.7,695.3 L795.8,695.6 L800.0,695.6 L804.0,695.3 L808.0,695.7 L812.0,695.4 L816.0,695.2 L820.0,695.3 L824.0,695.4 L828.0,695.5 L832.0,695.3 L836.0,695.2 L840.0,695.3 L844.0,695.6 L848.0,695.3 L852.0,695.6 L856.0,695.0 L860.0,695.5 L864.0,695.4 L868.0,695.2 L872.0,695.2 L876.0,695.2 L880.0,695.4 L884.0,694.8 L888.0,695.2 L892.0,695.1 L896.0,694.9 L900.0,695.0 L904.0,695.0 L908.0,695.0 L912.0,694.5 L916.0,694.8 L920.0,694.5 L924.0,694.5 L928.0,694.5 L932.0,694.0 L936.0,694.3 L940.0,694.0 L944.0,694.2 L948.0,693.8 L952.0,694.0 L956.0,693.9 L960.0,693.7 L964.0,693.8 L968.0,693.2 L972.0,693.5 L976.0,693.4 L980.0,693.3 L984.0,693.1 L988.0,692.8 L992.0,692.8 L996.0,692.9 L1000.0,692.6 L1004.0,692.4 L1008.0,692.6 L1012.0,692.4 L1016.0,692.4 L1020.0,692.4 L1024.0,692.0 L1028.0,692.4 L1032.0,692.0 L1036.0,692.2 L1040.0,691.7 L1044.0,692.2 L1048.0,691.9 L1052.0,692.0 L1056.0,692.0 L1060.0,691.8 L1064.0,691.3 L1068.0,691.3 L1072.0,691.2 L1076.0,691.4 L1080.0,691.0 L1084.0,690.9 L1088.0,690.8 L1092.0,690.7 L1096.0,691.1 L1100.0,690.8 L1104.2,691.0 L1108.3,690.6 L1112.5,690.7 L1116.7,690.5 L1120.8,690.5 L1125.0,690.3 L1129.2,690.4 L1133.3,690.1 L1137.5,690.1 L1141.7,690.1 L1145.8,689.9 L1150.0,690.0 L1154.2,690.2 L1158.3,689.6 L1162.5,689.6 L1166.7,689.9 L1170.8,689.4 L1175.0,689.6 L1180.0,689.5 L1185.0,689.6 L1190.0,690.2 L1195.0,690.5 L1200.0,690.8 L1204.3,690.7 L1208.6,690.7 L1212.9,690.9 L1217.1,691.0 L1221.4,691.3 L1225.7,691.5 L1230.0,691.3 L1234.0,691.7 L1238.0,691.9 L1242.0,692.1 L1246.0,692.2 L1250.0,692.4 L1254.0,692.7 L1258.0,692.3 L1262.0,692.6 L1266.0,692.8 L1270.0,693.1 L1274.0,693.3 L1278.0,693.4 L1282.0,693.8 L1286.0,693.8 L1290.2,694.1 L1294.5,694.3 L1298.8,694.6 L1303.0,695.0 L1307.2,695.4 L1311.5,695.7 L1315.8,696.0 L1320.0,696.3 L1324.0,696.4 L1328.0,696.7 L1332.0,696.9 L1336.0,697.1 L1340.0,697.6 L1344.0,697.6 L1348.0,698.2 L1352.0,698.3 L1357.0,700.1 L1362.0,701.8 L1366.2,702.1 L1370.5,702.9 L1374.8,703.2 L1379.0,703.8 L1383.2,704.0 L1387.5,704.3 L1391.8,704.6 L1396.0,704.9 L1400.2,705.0 L1404.5,704.9 L1408.8,705.3 L1413.0,705.4 L1417.2,705.4 L1421.5,705.9 L1425.8,706.1 L1430.0,706.3 L1434.1,706.6 L1438.2,706.4 L1442.3,706.9 L1446.4,706.8 L1450.5,706.7 L1454.6,707.2 L1458.7,707.0 L1462.8,707.3 L1466.9,707.1 L1471.0,707.5 L1475.0,707.3 L1479.1,708.0 L1483.1,707.5 L1487.2,707.7 L1491.2,707.8 L1495.3,707.9 L1499.3,708.4 L1503.4,708.6 L1507.4,708.5 L1511.5,708.5 L1515.5,708.9 L1519.5,708.8 L1523.6,708.6 L1527.6,709.1 L1531.7,709.0 L1535.7,709.0 L1539.8,709.2 L1543.8,709.3 L1547.9,709.3 L1551.9,709.7 L1556.0,709.9 L1560.0,709.8 L1564.0,709.9 L1568.1,709.7 L1572.1,710.2 L1576.2,709.9 L1580.2,710.2 L1584.2,710.5 L1588.3,710.5 L1592.3,710.7 L1596.4,710.7 L1600.4,710.5 L1604.5,710.5 L1608.5,710.8 L1612.5,711.0 L1616.6,710.9 L1620.6,711.0 L1624.7,711.3 L1628.7,711.2 L1632.8,711.4 L1636.8,711.5 L1640.8,711.8 L1644.9,711.4 L1648.9,711.5 L1653.0,712.0 L1657.0,711.9 L1661.2,712.1 L1665.3,711.9 L1669.5,712.0 L1673.6,712.1 L1677.8,712.4 L1681.9,712.7 L1686.1,712.4 L1690.2,712.5 L1694.4,712.8" fill="none" stroke="#b92c1d" stroke-width="2.4" stroke-linejoin="round"/><rect x="1807.8" y="557.8" width="11.8" height="3.4" rx="1" fill="#85bb74"/><text x="1823.4" y="563.2" font-size="10.70" fill="#d0d1d3" text-anchor="start" letter-spacing="0.20" stroke="#d0d1d3" stroke-width="0.3" >Solarleistung</text><rect x="1807.8" y="576.5" width="11.8" height="3.4" rx="1" fill="#b92c1d"/><text x="1807.6" y="599.2" font-size="10.70" fill="#d0d1d3" text-anchor="start" letter-spacing="0.13" stroke="#d0d1d3" stroke-width="0.3" >Reglertemperatur</text></svg>
<div class="p" style="left:26px;top:837px;width:303px;height:149px;"></div>
<span class="t" style="left:147.7px;top:844.8px;font-size:12.00px;color:#dcdde0;font-weight:bold;letter-spacing:0.03px;">Steuerung</span>
<span class="t" style="left:36.6px;top:868.6px;font-size:13.50px;color:#d8d9da;font-weight:bold;letter-spacing:0.00px;">*</span>
<span class="t" style="left:51.2px;top:869.6px;font-size:12.70px;color:#d8d9da;font-weight:normal;letter-spacing:-0.56px;-webkit-text-stroke:0.3px #d8d9da;">RPI</span>
<span class="t" style="left:74.2px;top:869.6px;font-size:12.70px;color:#459fd4;font-weight:normal;letter-spacing:0.18px;text-decoration:underline;text-underline-offset:1.2px;text-decoration-thickness:1px;-webkit-text-stroke:0.3px #459fd4;">ausschalten</span>
<div class="p" style="left:341px;top:837px;width:776px;height:149px;"></div>
<span class="t" style="left:691.2px;top:844.8px;font-size:12.00px;color:#dcdde0;font-weight:bold;letter-spacing:0.04px;">Regenmenge</span>
<div class="p" style="left:1129px;top:837px;width:776px;height:149px;"></div>
<span class="t" style="left:1476.9px;top:844.8px;font-size:12.00px;color:#dcdde0;font-weight:bold;letter-spacing:0.03px;">Tagesleistung</span>
<svg width="1924" height="1079" viewBox="0 0 1924 1079"><path d="M414.7,953.5 H1092" stroke="rgba(200,200,200,0.2)" stroke-width="1"/><text x="408.8" y="955.9" font-size="10.70" fill="#d0d1d3" text-anchor="end" letter-spacing="0.00" stroke="#d0d1d3" stroke-width="0.3" >0 mm</text><path d="M414.7,913.5 H1092" stroke="rgba(200,200,200,0.2)" stroke-width="1"/><text x="408.8" y="916.7" font-size="10.70" fill="#d0d1d3" text-anchor="end" letter-spacing="0.00" stroke="#d0d1d3" stroke-width="0.3" >0.5 mm</text><path d="M414.7,874.5 H1092" stroke="rgba(200,200,200,0.2)" stroke-width="1"/><text x="408.8" y="877.5" font-size="10.70" fill="#d0d1d3" text-anchor="end" letter-spacing="0.00" stroke="#d0d1d3" stroke-width="0.3" >1.0 mm</text><path d="M465.5,874.5 V953.5" stroke="rgba(200,200,200,0.2)" stroke-width="1"/><text x="465.8" y="970.0" font-size="10.70" fill="#d0d1d3" text-anchor="middle" letter-spacing="0.47" stroke="#d0d1d3" stroke-width="0.3" >10/4</text><path d="M562.5,874.5 V953.5" stroke="rgba(200,200,200,0.2)" stroke-width="1"/><text x="562.7" y="970.0" font-size="10.70" fill="#d0d1d3" text-anchor="middle" letter-spacing="0.47" stroke="#d0d1d3" stroke-width="0.3" >10/6</text><path d="M659.5,874.5 V953.5" stroke="rgba(200,200,200,0.2)" stroke-width="1"/><text x="659.5" y="970.0" font-size="10.70" fill="#d0d1d3" text-anchor="middle" letter-spacing="0.47" stroke="#d0d1d3" stroke-width="0.3" >10/8</text><path d="M756.5,874.5 V953.5" stroke="rgba(200,200,200,0.2)" stroke-width="1"/><text x="756.4" y="970.0" font-size="10.70" fill="#d0d1d3" text-anchor="middle" letter-spacing="0.48" stroke="#d0d1d3" stroke-width="0.3" >10/10</text><path d="M853.5,874.5 V953.5" stroke="rgba(200,200,200,0.2)" stroke-width="1"/><text x="853.2" y="970.0" font-size="10.70" fill="#d0d1d3" text-anchor="middle" letter-spacing="0.48" stroke="#d0d1d3" stroke-width="0.3" >10/12</text><path d="M949.5,874.5 V953.5" stroke="rgba(200,200,200,0.2)" stroke-width="1"/><text x="950.1" y="970.0" font-size="10.70" fill="#d0d1d3" text-anchor="middle" letter-spacing="0.48" stroke="#d0d1d3" stroke-width="0.3" >10/14</text><path d="M1046.5,874.5 V953.5" stroke="rgba(200,200,200,0.2)" stroke-width="1"/><text x="1046.9" y="970.0" font-size="10.70" fill="#d0d1d3" text-anchor="middle" letter-spacing="0.48" stroke="#d0d1d3" stroke-width="0.3" >10/16</text><text transform="translate(357.3,919.5) rotate(-90)" font-size="12.2" stroke="#d0d1d3" stroke-width="0.3" fill="#d0d1d3" text-anchor="middle">pro Tag</text><path d="M1211.2,952.5 H1880.3" stroke="rgba(200,200,200,0.2)" stroke-width="1"/><text x="1205.6" y="955.6" font-size="10.70" fill="#d0d1d3" text-anchor="end" letter-spacing="0.00" stroke="#d0d1d3" stroke-width="0.3" >0 Wh</text><path d="M1211.2,926.5 H1880.3" stroke="rgba(200,200,200,0.2)" stroke-width="1"/><text x="1205.6" y="929.6" font-size="10.70" fill="#d0d1d3" text-anchor="end" letter-spacing="0.00" stroke="#d0d1d3" stroke-width="0.3" >200.0 Wh</text><path d="M1211.2,900.5 H1880.3" stroke="rgba(200,200,200,0.2)" stroke-width="1"/><text x="1205.6" y="903.5" font-size="10.70" fill="#d0d1d3" text-anchor="end" letter-spacing="0.00" stroke="#d0d1d3" stroke-width="0.3" >400.0 Wh</text><path d="M1211.2,874.5 H1880.3" stroke="rgba(200,200,200,0.2)" stroke-width="1"/><text x="1205.6" y="877.4" font-size="10.70" fill="#d0d1d3" text-anchor="end" letter-spacing="0.00" stroke="#d0d1d3" stroke-width="0.3" >600.0 Wh</text><path d="M1261.5,874 V953" stroke="rgba(200,200,200,0.2)" stroke-width="1"/><text x="1261.8" y="970.0" font-size="10.70" fill="#d0d1d3" text-anchor="middle" letter-spacing="0.47" stroke="#d0d1d3" stroke-width="0.3" >10/4</text><path d="M1357.5,874 V953" stroke="rgba(200,200,200,0.2)" stroke-width="1"/><text x="1357.5" y="970.0" font-size="10.70" fill="#d0d1d3" text-anchor="middle" letter-spacing="0.47" stroke="#d0d1d3" stroke-width="0.3" >10/6</text><path d="M1452.5,874 V953" stroke="rgba(200,200,200,0.2)" stroke-width="1"/><text x="1453.2" y="970.0" font-size="10.70" fill="#d0d1d3" text-anchor="middle" letter-spacing="0.47" stroke="#d0d1d3" stroke-width="0.3" >10/8</text><path d="M1548.5,874 V953" stroke="rgba(200,200,200,0.2)" stroke-width="1"/><text x="1548.9" y="970.0" font-size="10.70" fill="#d0d1d3" text-anchor="middle" letter-spacing="0.48" stroke="#d0d1d3" stroke-width="0.3" >10/10</text><path d="M1644.5,874 V953" stroke="rgba(200,200,200,0.2)" stroke-width="1"/><text x="1644.5" y="970.0" font-size="10.70" fill="#d0d1d3" text-anchor="middle" letter-spacing="0.48" stroke="#d0d1d3" stroke-width="0.3" >10/12</text><path d="M1739.5,874 V953" stroke="rgba(200,200,200,0.2)" stroke-width="1"/><text x="1740.2" y="970.0" font-size="10.70" fill="#d0d1d3" text-anchor="middle" letter-spacing="0.48" stroke="#d0d1d3" stroke-width="0.3" >10/14</text><path d="M1835.5,874 V953" stroke="rgba(200,200,200,0.2)" stroke-width="1"/><text x="1835.9" y="970.0" font-size="10.70" fill="#d0d1d3" text-anchor="middle" letter-spacing="0.48" stroke="#d0d1d3" stroke-width="0.3" >10/16</text><text transform="translate(1145.3,919.5) rotate(-90)" font-size="12.2" stroke="#d0d1d3" stroke-width="0.3" fill="#d0d1d3" text-anchor="middle">pro Tag</text><rect x="1695.8" y="882.9" width="32.3" height="70.0" fill="#ebb839"/><rect x="1743.7" y="896.2" width="32.0" height="56.7" fill="#ebb839"/><rect x="1791.7" y="896.2" width="31.9" height="56.7" fill="#ebb839"/><rect x="1839.2" y="899.2" width="32.0" height="53.7" fill="#ebb839"/><circle cx="1027.6" cy="849.2" r="4.1" fill="none" stroke="#35a8df" stroke-width="1.5"/><path d="M1027.7,846.8 V849.5 H1025.6" fill="none" stroke="#35a8df" stroke-width="1.1"/><circle cx="1815.6" cy="849.2" r="4.1" fill="none" stroke="#35a8df" stroke-width="1.5"/><path d="M1815.7,846.8 V849.5 H1813.6" fill="none" stroke="#35a8df" stroke-width="1.1"/></svg>
<span class="t" style="left:1036.0px;top:844.0px;font-size:10.70px;color:#5ab8e4;font-weight:bold;letter-spacing:0.03px;-webkit-text-stroke:0.4px #5ab8e4;">Last 2 weeks</span>
<span class="t" style="left:1824.0px;top:844.0px;font-size:10.70px;color:#5ab8e4;font-weight:bold;letter-spacing:0.03px;-webkit-text-stroke:0.4px #5ab8e4;">Last 2 weeks</span>
</div></body></html>
